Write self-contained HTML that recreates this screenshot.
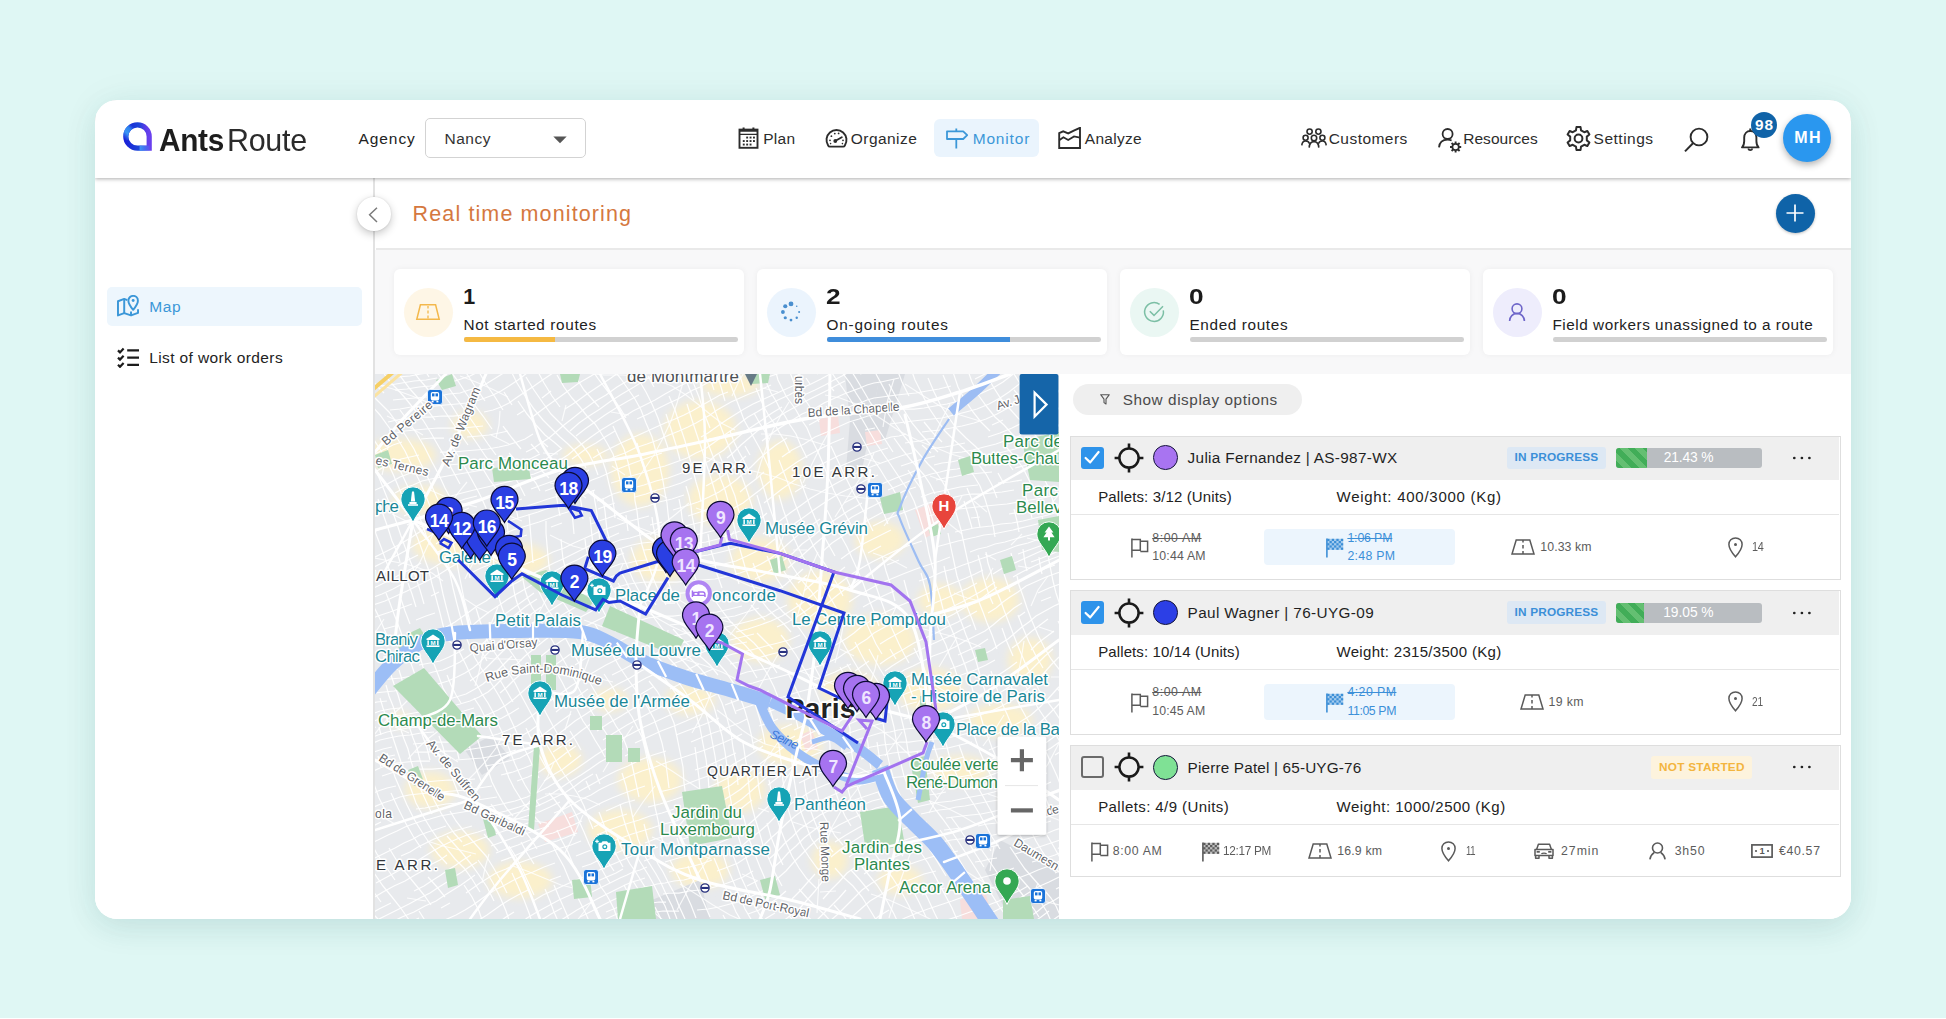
<!DOCTYPE html>
<html lang="en"><head><meta charset="utf-8"><title>AntsRoute - Real time monitoring</title>
<style>
*{box-sizing:border-box;margin:0;padding:0}
html,body{width:1946px;height:1019px;overflow:hidden}
body{background:#dff7f4;font-family:"Liberation Sans",sans-serif;position:relative}
#app{position:absolute;left:95px;top:100px;width:1756px;height:819px;border-radius:22px;background:#fff;overflow:hidden}
#shadow{position:absolute;left:95px;top:100px;width:1756px;height:819px;border-radius:22px;box-shadow:0 10px 30px 0 rgba(20,90,90,.10),0 0 40px 0 rgba(20,90,90,.05)}
#g{position:absolute;left:-95px;top:-100px;width:1946px;height:1019px}
.b{position:absolute;display:block}
.t{position:absolute;white-space:nowrap;line-height:1;display:block}
</style></head>
<body>
<div id="shadow"></div><div class="b" style="left:0;top:1018px;width:1946px;height:1px;background:#fff"></div>
<div id="app"><div id="g">
<svg class="b" style="left:375px;top:374px" width="684" height="545" viewBox="375 374 684 545" font-family="Liberation Sans, sans-serif"><rect x="375" y="374" width="684" height="545" fill="#e8eaed"/>
<defs><filter id="bl" x="-20%" y="-20%" width="140%" height="140%"><feGaussianBlur stdDeviation="4"/></filter><filter id="bl2"><feGaussianBlur stdDeviation="1.2"/></filter></defs>
<g filter="url(#bl)" fill="#fbf0cc" opacity="1"><ellipse cx="400" cy="455" rx="36" ry="16"/><ellipse cx="420" cy="500" rx="27" ry="14"/><ellipse cx="455" cy="545" rx="43" ry="20"/><ellipse cx="520" cy="560" rx="29" ry="16"/><ellipse cx="470" cy="425" rx="18" ry="13"/><ellipse cx="585" cy="455" rx="22" ry="10"/><ellipse cx="640" cy="470" rx="29" ry="36"/><ellipse cx="700" cy="430" rx="36" ry="29"/><ellipse cx="720" cy="500" rx="32" ry="25"/><ellipse cx="660" cy="560" rx="29" ry="22"/><ellipse cx="760" cy="560" rx="29" ry="22"/><ellipse cx="780" cy="470" rx="22" ry="29"/><ellipse cx="730" cy="385" rx="29" ry="11"/><ellipse cx="820" cy="600" rx="32" ry="29"/><ellipse cx="880" cy="640" rx="36" ry="25"/><ellipse cx="930" cy="690" rx="32" ry="22"/><ellipse cx="850" cy="690" rx="29" ry="18"/><ellipse cx="760" cy="640" rx="29" ry="22"/><ellipse cx="990" cy="600" rx="29" ry="22"/><ellipse cx="960" cy="770" rx="29" ry="14"/><ellipse cx="1000" cy="720" rx="32" ry="16"/><ellipse cx="790" cy="745" rx="32" ry="20"/><ellipse cx="740" cy="790" rx="25" ry="22"/><ellipse cx="650" cy="780" rx="32" ry="22"/><ellipse cx="620" cy="830" rx="32" ry="20"/><ellipse cx="700" cy="870" rx="29" ry="18"/><ellipse cx="560" cy="760" rx="22" ry="16"/><ellipse cx="430" cy="790" rx="25" ry="18"/><ellipse cx="460" cy="850" rx="29" ry="18"/><ellipse cx="520" cy="880" rx="32" ry="18"/><ellipse cx="400" cy="720" rx="11" ry="7"/><ellipse cx="880" cy="540" rx="25" ry="18"/><ellipse cx="940" cy="600" rx="22" ry="16"/><ellipse cx="1030" cy="660" rx="22" ry="22"/><ellipse cx="900" cy="880" rx="22" ry="14"/><ellipse cx="1020" cy="800" rx="18" ry="14"/><ellipse cx="830" cy="860" rx="18" ry="18"/><ellipse cx="690" cy="700" rx="25" ry="14"/><ellipse cx="610" cy="700" rx="18" ry="11"/></g>
<polygon points="845,374 880,374 872,420 862,470 846,470 850,420" fill="#d9dce1" />
<polygon points="880,374 905,374 885,440 868,440" fill="#d9dce1" />
<polygon points="465,750 492,735 510,758 482,775" fill="#d9dce1" />
<polygon points="640,905 700,880 710,919 640,919" fill="#d9dce1" />
<polygon points="1000,840 1059,870 1059,919 1010,919 985,870" fill="#d9dce1" />
<polygon points="915,510 940,500 950,525 925,538" fill="#f7dedd" />
<polygon points="538,824 572,812 578,832 545,842" fill="#f7dedd" />
<polygon points="819,419 838,416 840,433 821,436" fill="#f7dedd" />
<polygon points="865,432 880,430 882,444 867,446" fill="#f7dedd" />
<polygon points="800,735 812,730 818,748 806,752" fill="#f7dedd" />
<polygon points="960,900 985,890 992,919 962,919" fill="#f7dedd" />
<path d="M380 370L392 368L404 367L416 365M398 377L410 376L421 374L432 372L443 369M369 389L379 386L390 385L402 383L414 381L426 380L437 378M456 372L465 369L473 364M365 397L374 394M395 390L407 389L419 387L430 386L441 384L452 382L461 379L470 376L478 372L486 367M365 409L374 405M393 400L403 399L415 398L427 397L438 396L449 394L460 393L469 390L478 388L486 384L494 379L502 374L511 368M390 410L400 409L411 407L422 406L434 406L445 405L457 404L467 403L476 401L485 398L493 395L501 391L509 386L518 380L527 373L538 366M372 429M388 422L397 420L407 418L418 417L430 417L442 416L453 416L464 415M484 412L493 410L501 407L509 403L516 398L525 392L534 386L544 379L556 371M372 444M388 436L396 433L405 431L415 430L426 429L438 428L450 428L461 428L473 427L483 426M517 415L525 410M542 398L551 391M574 376L587 368M368 458L377 453L385 449L393 445L402 442M421 439L432 438L444 438M467 437L479 436L489 435L499 433L508 431M531 418L539 412L547 406L557 399L568 391L579 383L591 376L604 368M366 478L375 472L384 467L393 463L401 459L410 457L419 455M440 452L452 452L464 451L476 450L488 449L499 447L508 445L517 442L525 439L533 434M548 423M565 409L576 402L587 394L599 386L611 378L622 370M371 492L382 487L391 482L400 477L408 474L417 471L426 469M448 465L460 464L472 463L484 462L496 460L507 458M526 452L534 448L541 443L549 438L556 432L564 425L573 418L583 410L594 402L606 395L617 387L629 380L640 373L650 366M375 503M395 493L404 488L413 485L422 481L431 479L442 477L453 475L465 473L477 471L489 469L501 467L512 465L523 462L532 458L540 454M570 431L579 423L589 416L600 409L611 401L622 394L634 387L645 380L655 374M368 520L379 514L390 509L400 504L409 499L417 495L426 492M446 486M482 479M506 474L518 471L528 467M546 459L554 454L561 449M576 436L585 429L595 422L605 415L616 408L628 401L639 395M660 383M684 368L692 364M372 533L384 527M404 516L413 512L422 507M441 499L451 496L462 493L474 490L487 487L499 484L512 481L523 477L534 474L544 470M560 460L568 455L575 449L583 443L591 437L601 430L611 424L622 418L633 411L645 405L655 400L665 394L674 389L682 385L690 381L697 377L704 374L712 371M730 365M375 542M407 525L416 520L425 515L434 511L444 506L454 503L465 499L477 496M502 489L515 486L527 482L538 478L547 474L556 469M572 459L579 454L587 448L596 443L605 437L615 431M637 419L648 414L659 408L669 403L678 399L686 394L693 390L700 387L707 383L715 380L723 377L732 374L742 371M765 365M367 561L379 555L391 549L402 543L412 537L421 531L430 526M448 517L458 513L469 508M494 501L507 497M531 489L542 485L553 481L562 477L570 472L577 468M593 458L601 453L611 448L621 443L632 438L643 433L654 428L665 423L675 419L684 415L692 411L699 407L706 403L713 399L720 395L728 392M757 381L768 377L780 373L791 370L802 366M370 569L382 563L394 557L405 551L415 545L424 540L433 534L441 529L451 524L461 520L472 515L484 511L496 507L509 503L522 499M545 491L556 487L565 483L573 479L581 475L589 470M605 462L614 457L625 453L635 448L647 444L658 440L669 435L679 431L688 427L696 423L703 419L710 415L717 410L724 406L731 402L740 398L749 394L760 390L771 385M794 377L804 372M374 578M398 566L408 560L418 555M436 544L444 538M463 529L474 524L486 520L498 516L511 511L524 507L536 503L548 499L558 496L568 492L576 488L584 484L592 480L600 477L609 473L618 469L628 465L639 461L650 457L662 453M683 445M701 437L708 433L715 428L722 423L728 419L736 414L744 409L753 404L764 399L775 394L786 389L797 384M817 374L826 369L834 365M365 592L378 586L390 580L401 574L411 569L421 563M438 552L447 547L456 542L465 538L476 533L487 528L500 524L512 520L525 516L538 512L549 508L560 504L570 501L579 497L587 493L595 490M611 483L621 480L631 476L642 473L653 469L665 466L676 462L687 458L696 453L705 449L712 444L719 439L726 434L733 429L740 423L748 417L757 412L767 406L778 400L789 395L800 389L811 384L821 379L830 374L838 370L845 366M369 599L382 594L393 589L404 583M424 573L433 568L441 563L449 558L458 553M477 544L489 539L501 535L513 530L526 526L539 522L550 518L561 514L571 511L580 507M597 501L605 498L613 494L623 491L633 488L644 485L656 481L668 478L679 474L690 470L700 465L709 461L716 455L724 450L730 444L737 438L744 432L753 426L762 420L772 413L782 407M804 395L815 390L825 385L834 380L842 376L849 372L857 368L864 365M373 605L385 601L396 596L407 591L417 586L427 581L435 577L443 572L451 567L460 562L469 558L479 553L490 548L501 544L514 539L527 535M551 527L562 523M581 515M598 509L606 506L615 503M635 497L646 494L657 490L669 487L681 483L692 478M711 469M727 458L734 452L741 445L748 439L756 432L765 425L775 419L786 412L797 406L808 400L818 395L828 390L837 385L845 381M860 374L867 372L875 369L884 367L893 364M367 620L378 616L390 612L401 608L412 604M431 596L439 592M454 583M471 573L481 568L491 564M527 549M552 540M591 524L599 521L608 518L616 515L626 512L636 509L648 506L659 502L672 499L684 495M706 486L715 481L724 475L731 469L739 462L746 456M762 441L771 434L781 427L791 421L802 414L814 409L824 403L835 398L844 394L852 391L860 388L867 385L874 383L881 382L890 380L899 378M933 372L945 370L957 366M384 629L395 626M416 620L426 616L435 613M451 605M466 595M493 580L504 574L516 568L528 563L541 558L553 552L564 548L574 543L583 539L592 535L600 531L609 528L618 525L627 522L638 519L649 516M673 510L686 506L698 502L709 497L719 492L728 486L736 480L744 473L751 467L759 459L767 452L776 445L787 438M809 425L820 419M842 410L851 406L860 403L867 400L874 398L882 397L889 396L897 395L906 394L916 393L927 391L939 389L951 386M975 379L985 374L995 369M368 647L378 645L389 643L400 641L411 638L421 636L431 633L440 630L448 626L455 622L462 617L469 612L477 606L486 601L495 594L506 588L518 582L530 575L542 569L554 563L565 558L575 553L585 548L593 544L602 540L610 537L619 533M650 525L662 522M688 516L700 512L711 508M740 492L748 485L756 479L764 472M782 457L792 450L804 444L815 437L827 432L838 427L849 422L859 419L868 416L876 414L883 412L890 411L897 410L905 409L914 409L924 408L935 406L947 404L959 401L971 398L982 393L993 388L1003 382L1012 375L1020 368M383 657L393 655L404 653L415 652L425 649M452 640L459 635L466 630L473 625L480 619L489 612L498 606L508 599L520 592L532 585L544 578L555 571L566 565L577 560L586 555L595 550L603 546L612 543L620 540L630 538L640 535L651 533L664 531L676 528L689 525L702 522L714 518L725 513L734 508L743 503L752 496L760 490L768 483L777 476L787 469L797 462L809 455L820 449L832 443L844 438M865 430L875 428M890 424L898 423L905 422L913 421L922 420L932 419L942 418L954 415L966 412L977 409L989 404L1000 398L1009 392L1018 385L1027 377L1035 369M387 670L398 669M419 665L430 663L440 661L449 657L457 653L464 649M477 637L485 631L493 624L502 616L512 609L523 601L534 593M558 579L569 572L579 567M597 557L606 553L614 550L622 548L632 545L642 543L653 542M678 538L691 536L704 533L716 530L727 526M747 516M764 503L773 496L782 489L792 482L802 475L814 468L826 462L838 456L850 451L862 446L873 443L882 440L891 437L899 436L906 434M922 432L930 431L940 430L951 428L962 426L974 423L986 419L997 414L1008 408L1017 401L1026 394L1035 386L1043 378L1051 369M371 682L380 680L390 679L401 678L412 676L423 675L433 672L443 670L452 666L460 662L467 657L474 652L481 645L488 639L496 631L505 623L515 615L525 607L537 599M560 584L571 578L581 572L591 567L599 562L608 559L616 556L624 553M644 550L655 549M680 546L693 544L706 542L718 539L729 535L740 531L750 526L759 520L767 513M795 492L806 485M830 471L843 465L855 460L867 455L878 451L888 448M905 443L912 442L920 441L928 439L937 438M968 432M992 425L1003 420M1033 400L1041 392L1049 384L1057 375L1065 367M366 695L375 693L384 692L394 691L405 689L416 688L427 686L438 684L448 681L457 677L465 673L473 668L480 662L486 655L493 648L501 640L510 632L519 623L530 615L541 607M564 592L575 585L585 579L595 574L603 570L612 567L620 564L628 563L637 561L647 560M670 559L682 558L695 557L708 555L721 552L733 549L744 545M763 534L772 527L781 520L790 513L800 506L811 498L823 491L835 484L848 477L861 471L873 466L884 462L895 458L904 455L912 453M928 449L936 448L945 447L955 445L965 443M988 437L1000 433L1012 428L1022 423L1032 416L1041 409L1049 401L1057 393L1065 385M369 704L377 702L387 701M408 698M430 695M470 681L477 676L484 670L491 663L498 656L506 648L514 639L524 631L534 622L545 614L557 606L568 599L579 593L590 587L599 582L608 578L616 575L624 573L632 572L640 571L650 570L661 570L673 570M698 568L711 566L724 564L736 561L747 556L757 551L766 546L775 539M794 524L804 517L815 509L827 501L840 493L853 487L866 480L878 475M901 466L910 463L919 460L927 458L935 456M952 453L962 452L973 450L984 447L996 444L1007 440L1019 436L1030 430L1040 424L1049 417L1057 410L1065 402M372 714L380 711L390 709L400 708M446 700L456 697L466 694L475 689L483 684L490 678L497 671L504 664L512 656M529 639L540 631L551 623L562 615L574 608L585 602M604 592L613 589L621 586L629 584L637 583L645 582L655 582L665 582L677 582L689 581L702 580L715 579L728 576L740 573L751 569L761 564L771 558L780 551L789 543L798 535L809 527L820 519M844 503L858 496L871 489L884 483L896 478L907 474L917 470M934 465L942 463L951 462L960 460L969 459L980 457L991 455L1003 452L1015 449L1027 444L1038 439L1048 433L1057 427L1065 420M366 724L374 721L382 718L392 716L402 715L414 713L425 711L437 710L449 707L460 704L470 701L479 697L488 692L495 686L502 679L509 672L517 664L525 656L535 648L545 640L556 632L568 625L579 618L590 612L600 606L610 602L619 599L627 596L634 595M650 593M670 593L681 593L693 592L706 591M732 587M755 579L765 574L775 567L784 560L793 553L802 544L813 536L824 527L836 519L848 511L862 503M888 490L900 485L912 480L922 477L931 474L940 472L948 470L957 469L966 467M986 464L998 462L1010 460L1022 457L1034 453M1055 443L1064 437M367 730L376 727M394 722L405 720L416 719L428 717L440 716L452 713L464 711L474 708M500 693L507 687L514 680L522 673L531 665L540 657L550 649L561 641L573 634L584 627L596 621L606 616L616 612L624 609L632 606M648 604M665 603L675 603M698 602L710 600L723 598L736 596L748 592M769 582M788 568L797 560L806 552L816 543L827 534L839 526L852 517L865 510L879 503L892 497L904 491L916 487M936 480L945 478L953 477L962 475L971 474L981 473L992 472M1015 468L1027 465L1039 461L1050 457L1061 452M370 738L378 735L387 732L397 730L408 728L419 727L431 726L444 724L456 723L468 720L479 718L489 714L498 710L506 705L514 699L522 692L530 685L538 678L548 670L558 663L569 655L581 648L592 641M614 631M633 623L641 620L648 618L656 617L664 616L673 616L682 615L693 614L705 613L717 612L730 609L742 606M765 597L775 591L785 585L794 577L803 569M822 552L832 543L844 535L857 527L870 519L883 512M921 497L932 493L942 491L951 489L960 487L968 486L978 485M998 483L1010 482L1022 480M1046 474L1058 470L1068 465M371 744L380 740L389 738L399 736L410 735L421 733L434 732M459 730L471 728L483 725L493 722L502 718L511 713L519 708M535 695L543 688L553 680M575 665L586 658L598 652L610 646L620 641L630 636M647 630L655 627M670 625L679 624M699 622L710 620L722 618L735 616L747 612L759 608M780 597M798 583L807 575M826 558M848 541M873 526L887 519L900 514L913 509L925 504L936 501L946 499L955 497L964 495L972 494L982 494L991 493L1002 492L1014 490M1062 479M365 756L374 752L383 749L392 747M413 744L425 743L437 742L450 742L463 740L476 739L487 737L498 734L508 730L517 726L525 721L533 715L542 708L550 701L560 694L571 686L582 679L594 672L606 665L618 659L629 653L639 649L648 645M664 639L671 636L679 635L687 633L696 632L706 630L718 629L730 626L742 623L754 620L766 616L776 610L787 605M804 591L813 583L822 575M841 559L852 551L865 543L877 537L891 530M929 516L940 513M959 509L968 508L977 507L986 506L996 505L1007 504L1018 502L1030 500L1043 498L1055 495L1067 491M368 763L377 760L385 757L395 755M415 752L427 752L440 751L453 751L466 750L479 748L491 746L502 744L512 740L521 736L530 731L538 725M556 712L566 704L577 697L588 689M612 675L624 669L635 663L645 658L655 654L663 650L671 647L678 644L686 642L694 640M713 637M736 632L748 629L760 625L771 621L782 616L792 610L801 604L810 597L818 590M835 575L845 567M868 553L881 546M932 527L943 524M971 518L980 517M1009 514L1021 512L1033 510L1046 507L1058 504M371 772L380 768L388 765L397 763L407 762L418 761L430 761M456 760L469 759L482 758L494 756L506 753L516 750M535 740L543 735L552 728L561 721L571 714M593 699L606 691L618 684L630 678L641 671L652 666M670 657L678 654M693 648L701 646L710 644L719 642L730 640L742 637L754 634M777 627L788 622L798 616L807 610L815 604L823 597L831 590L840 583L849 576L860 569L872 562L884 556L897 550L910 545L922 541M955 532L965 530L974 528L982 527L991 526L1001 524L1012 523L1023 521L1035 518L1048 515L1061 511M382 776L391 773L400 771L410 770L421 769L432 769L445 768L458 768M485 766L497 764L509 761L520 758L529 753L538 748L547 742L556 736L565 729L575 721L586 714L598 706M623 691L635 684L646 678L657 673L667 668L675 663L683 660L691 656L698 654L706 651L715 649L725 647L736 644L747 642M770 635M793 627L802 622L811 616L819 610L827 604L835 597L844 590L853 584L863 577M887 565L899 560M936 547L947 544L958 541L967 539L976 537L984 535L993 534L1003 532L1013 530L1025 527L1037 524L1049 521L1062 517M369 795L378 791L387 788L396 786M414 783L425 782L436 781L449 780L462 780L475 779M501 775L513 772L524 768L534 764M553 752L562 746L571 739L581 731L592 723L604 716L616 708M641 694L653 687M683 672L691 668L699 664M715 659L723 657L733 654L743 652L755 649L766 646L778 643L789 640L800 635M826 620L834 614M849 602L858 596L868 590L879 584L891 579L903 574L916 569L928 565L940 561L950 557M970 552L978 549L987 547L995 544L1005 542L1015 539L1026 536L1038 533L1051 529L1064 525M374 807L383 803L392 800L400 797L409 795L418 794L429 793L440 792L453 791L466 790L479 788L492 786M517 781L528 777L539 772L548 766L557 760L566 753L576 746M597 731L609 723L621 716L634 708L647 701M670 689L680 684L690 679L698 675L706 672L713 669M730 664L739 662L750 659L761 657L772 654L784 651L795 648L806 644L815 639L824 635M839 624L847 619M863 607L872 602L883 596L894 591M919 581L931 577L942 572L953 569L963 565L972 562L980 559L989 556L997 553L1006 550L1016 546L1028 543L1039 539L1052 535L1065 530M371 827L381 822M399 815M416 809L425 808L435 806L446 804L458 803L471 801L484 799L497 797M522 790M544 781L553 775L563 769L572 762L581 755M603 740L614 733L627 725L640 718L653 711L665 705L677 700L688 695L697 690L706 686L714 683L721 680M738 675L747 672L758 670L769 668L780 665M813 655L823 651L832 647L839 643L847 638L854 633L861 627L869 622L878 616L888 611L899 606L911 601L922 596L934 591L946 586L956 582L966 578L975 574L983 570M1018 554L1029 550L1040 546L1053 541M367 845L378 840L388 835L397 831L405 827L413 824L422 821L430 819L440 816L451 814L463 812L475 810L488 807L502 804L515 801L527 797L538 792L548 787L558 781L567 775L576 769L586 762L596 755L607 748L619 740L631 734L644 727L657 721L670 715L682 710L693 705L702 700L711 697L719 693L727 690L735 687L744 685L753 683L763 680L774 678L786 675L797 672L809 669L819 666L829 662L838 658L845 653L853 649L859 644L867 639L874 633L883 628L892 623L903 617M926 607L937 602L949 597L959 592L968 588L977 583M993 574L1001 569L1010 565L1019 561L1030 556L1041 551L1053 547L1066 542M375 858L385 853L395 848L404 843L413 839L420 835L428 832L437 829L446 826M468 820M493 814L506 811L519 807L531 803L542 798L553 793L562 787L571 781L581 775L590 769L600 762L611 756M635 743L648 737L661 731L674 726L686 721L697 716L707 712M725 705L733 702L741 699L749 697L759 694L769 691M791 686M814 680L825 676L835 672L843 668L851 664M865 654M880 644L888 639L897 634L907 628L918 623L930 618L941 612L952 607L962 602L971 597L980 592L988 587L995 582M1011 572M1031 562L1042 558L1054 553L1066 548M369 873L380 867M401 856L410 852L418 847L426 843L434 839L442 836L451 832L461 829L472 826M497 819L510 815L523 811L535 807L546 802L556 797L566 792L575 786L583 780L593 774M625 756L637 750M676 735L689 730L700 726L710 722L719 718M736 711L744 708L753 705L762 702L772 699L783 697L795 693L806 690L818 687L828 683L838 679M855 671L862 666L869 661M891 646M910 635M932 625L944 619L954 614L964 608L974 603L982 598L990 592L997 587M1013 577L1022 572L1032 567L1043 562L1054 558L1067 553M376 883L387 877L398 871L408 866L417 861L425 856L433 851L440 847L448 843L457 839L467 835L478 832L490 828L502 824L514 820L527 816L539 812L550 807L560 802M578 792L587 787L596 782L606 776L616 771L628 766L640 760L653 755L666 751M691 742L703 737L713 733L722 730L731 726L739 723L747 719M765 713L776 709L787 706L798 702M821 695M842 687L851 682L859 678L867 673M880 664L887 659L895 654L904 649L914 643L925 638L936 633L947 627L958 622L968 616L977 611M1007 589L1015 584L1024 579L1033 574L1044 569L1055 565M371 899L383 892L394 886L405 881L415 875L424 870L432 864L440 860L447 855M463 846L473 842L483 838L495 834L507 830L519 826L531 822M554 813L564 809L573 804L582 799L591 795L599 790L609 785L619 781L630 776L642 771L655 767L668 762L681 758L693 754L705 750L715 746L725 742L734 738L742 734M759 726L768 723L778 719M801 711L813 706L825 702L836 698L846 694L855 689L863 685L871 680M885 671L892 666L900 661L908 656L918 651L928 646L939 641L950 636L961 630L971 625M988 613L996 608L1003 602L1010 597L1018 592L1026 586L1035 582L1046 577L1057 573L1069 569M368 915L379 909L391 903M414 891L424 886L433 880L441 875L448 870L456 865L463 860L471 855M491 846L502 842L513 838L525 834L537 830L549 826M569 818L578 814L587 810L595 806L603 802L612 798L622 794L633 790L645 786M670 778M695 770L707 766L718 761L727 757L736 753M753 743L762 739M781 729L792 724M816 715L828 710M868 692L875 688L883 683L889 679L897 675L904 670L913 666L923 661L933 656L944 652L955 647L965 641L975 636L985 631L993 625L1000 619L1007 614L1014 608L1022 603M1038 593L1049 588L1060 584M373 922L385 916L397 910L409 904L420 898L430 893L439 887L447 882L454 877L462 872L469 867L477 862M496 853L506 849L518 845L530 840L541 836L553 833L563 829L573 825L582 821M606 811L615 807L624 803L635 800M659 792L672 789L684 785L697 780L708 776L719 772L729 767L737 762L746 757L754 752L763 746M794 730L805 725M841 710L852 705L862 701L870 697L878 692L885 688L892 684L900 680L907 677L916 673M936 664M958 655L969 650L979 645L988 639M1004 628M1018 617L1025 612M1041 601L1051 597M378 928L390 923L402 917L414 912L425 906L436 901L445 895L453 890L461 885L468 880L475 875M501 861L512 857L523 852L534 848L546 844L557 841L567 837L577 833M594 827L601 823L609 820L618 817L627 814M648 807L660 804L673 800L685 796M709 787L720 782L730 777L739 771L747 766M764 754M784 742L795 736M819 725L831 720M854 710L864 706L873 702L881 698L888 694L896 691L903 687L911 684L919 681L929 677M950 669L961 665L972 660L982 655L992 650L1000 644L1008 639L1015 633L1022 627L1029 622L1036 616L1045 611L1054 606L1065 601M395 929L407 924L419 918M441 908L450 903M466 893L473 888L480 883L488 878L496 873L506 869L516 864L527 860L538 856L550 852L561 848L571 845L581 841M597 835L604 832L612 829L620 826L629 823L639 820L650 816L662 813L674 809M710 795L721 790L731 785L739 779L748 773L756 767L765 760L774 754L784 747L795 741L807 735L819 729L832 724L844 719L855 715L865 710M898 697L905 694L913 691L922 688M942 682L953 678L964 674L975 670L986 665L995 660M1012 648L1019 643L1025 637L1032 631L1040 625L1048 619M1068 609M425 929L436 924L447 919L456 915L465 910L473 905L480 900L487 895L495 890L503 886L512 881L522 876L533 872L544 867L555 863M576 856L586 852L594 849L602 846L609 843L616 840L624 837L632 834L642 831L652 828L664 824L676 821L688 816L700 812L711 806L722 801L732 795L741 789L749 782L757 775L766 768L775 761M796 748L808 742L820 736L833 730L845 726L856 721L867 718M885 711M901 707L909 704L917 702M936 698L946 695L957 692M991 679L1000 674L1009 668L1017 662M1031 650L1038 643L1046 637L1054 631M471 925L479 920L487 915L494 910L501 905L509 900L518 895L528 890M550 880L561 876M582 867L591 864L599 860L607 857L614 854L621 851L628 848M645 843L655 839L666 836L678 832L690 828L702 823L713 817L723 812L733 805L742 799L750 792L758 785L767 777M796 756L808 750L821 744L833 739L846 734L858 730L869 727L879 724L888 722M904 719L912 717L920 716L930 714L939 712L950 710M985 700L996 695L1006 689L1015 683L1024 677L1031 670L1038 663L1045 656L1053 649M491 928L498 923L506 917L514 912M533 901L543 895L554 890L565 885L576 880L586 876L595 872L604 868L611 865L618 862L625 859L632 856L640 853L648 850L658 847M680 840L692 836L703 831L715 826L725 820L735 813L743 807L752 800M768 785L777 778L786 771L797 764L809 757L821 752M846 742L859 739L870 736L880 733L890 732L898 730L906 729L915 728L923 727L932 726L942 724L953 722L965 719L977 716L989 712L1000 707L1011 701L1020 695L1029 688L1037 680L1044 673L1051 665L1058 658L1067 650M519 925L527 918L537 912L548 906L559 900L570 895L581 889L591 885L600 880L609 876L616 873L623 869M644 861L652 858M672 852L683 849L694 845M727 829M754 809M769 795L778 788M798 774L810 768L822 762L835 757L847 753L860 750L871 747L882 745L892 744L900 742L909 742L917 741L926 740L935 739L946 738L957 736L969 733L981 729L993 725M1026 706M1051 683M1066 667M531 928L540 921L551 914L562 908M584 896L594 891L604 886L612 882L620 878L627 875L633 872L640 870L647 867M665 862L675 859L686 856L697 852L708 848L719 843L730 838L739 832L748 825L756 818L763 811L771 804L780 797M799 783L811 777L823 771M861 759L873 757L883 755L893 753L902 752L911 752L920 751L928 750L938 749L948 748L960 745L972 742M997 734L1009 728L1020 722L1031 715L1040 707L1048 699L1056 690L1064 682M555 924L566 917L577 910L588 904L599 898L609 893L617 889L625 885L632 882L639 880L645 878M669 872L679 869L690 867L701 864L712 860M734 850L743 845L751 838L759 832L767 825L775 817L783 810L792 803L802 797L813 790L825 785L838 780L850 776L863 772L875 770L886 768L896 766M914 764L923 764L932 763L942 761L952 760L964 757M989 750L1001 745L1014 739L1026 732L1037 725L1046 717L1055 708L1064 699M580 917L592 911L603 905L613 900L622 896L630 892L637 890L644 887L650 886L657 884L665 883L674 881L684 880L695 877M717 871L728 867L738 863L747 857L756 851L764 845L771 838L779 831L787 823L795 816L805 809L816 803L828 797L840 792L853 787L866 784L878 781L889 778L899 777L908 776L917 774L926 774L935 772L945 771L956 769M979 763L992 759L1006 754L1018 747L1031 741L1042 733M1061 716M606 912L616 908L626 904L634 901L642 898M663 894L671 893L679 893L689 891L700 890L711 888L722 885L733 881L743 877L753 871M769 859L777 852L784 844L792 837L800 829L810 822L820 815L832 809L844 804L857 799L869 795L881 791L892 789M912 785L921 784L930 783L939 781L949 780L959 777L971 775L983 771M1010 762L1023 756L1036 749L1047 742L1058 734L1068 725M597 924L608 918L619 913L628 910L637 907M652 903L659 902L666 902M683 901M703 899M726 894M747 886L757 881M773 868L781 861L788 853L796 846L804 838L813 831L824 823M860 806L872 801L884 798L895 795M915 791L924 789L933 788L942 787M962 783L974 780L986 777L999 772L1013 767L1026 762L1039 755L1051 748L1062 740M610 925L621 921L631 918L640 915L648 913L656 912L663 911L671 911L679 911M697 910L708 909L719 907L730 904L742 901L752 896L762 891L771 885L778 878L786 871L793 863L801 855L809 847L818 839L828 832L839 825L851 819L864 813L876 808L888 805L899 801L910 799L919 797L928 795L937 794L946 792M966 789L977 786L990 783L1003 779M1029 768M1055 755L1066 748M645 927L653 926L661 925L669 925L676 925L684 925L694 924L703 924L714 923L726 921M748 914L759 910L769 904L778 898L786 891M801 875M816 858M835 842L846 835L858 828L870 822L882 817M905 810L916 807L925 805L934 803L943 802L952 801L961 799L971 797L982 795L994 792L1007 788M1034 779L1047 773M742 927M765 919L775 913M792 899L800 891L807 883L815 874M831 857L841 849L852 842L863 835L876 829L888 824L899 820M921 814L930 812L939 810L948 809L956 807L965 806L975 804L986 802L998 800L1011 796L1024 792L1038 788L1051 782M771 928L782 922L791 915L800 908L808 899L815 891L822 882L830 874M849 857L859 850L871 843L882 837L894 832L906 828L917 824L927 822M946 818L954 817L962 816L971 815L981 814L991 812L1003 809L1016 806L1029 803L1042 798L1055 793L1068 788M799 923L808 915M823 899L831 890L839 882L847 873L857 866M878 852L890 846L902 841L914 837L925 834M944 830L953 829L961 828M978 826L987 824L997 823L1008 821M1034 814L1047 810L1060 805M815 922L823 914L831 906L839 898L846 890M864 874L875 867L886 861L897 856L909 851M932 844L942 842L951 840L960 839L968 838L976 837L984 836L993 835L1003 833M1025 828L1038 825L1051 821M822 929L830 921L838 914L846 906L854 898L862 890L872 883L882 877L893 871L905 866L916 862L928 858L939 855L949 853L958 851M975 849L982 848L990 847L999 845M1019 841L1030 838L1043 835L1055 830L1068 826M846 923L854 915L862 908L870 901L880 895L890 889L901 883L912 879L924 874L936 871M957 866M975 862L982 861L990 859L997 858M1015 854L1025 851L1036 848L1048 844L1060 840M863 929L871 923L879 916L889 910M922 895L933 891L945 888M966 882L976 879L984 877L992 875L999 873L1006 871L1014 868M1032 862L1043 859L1055 855L1066 850M895 923L905 918L917 913L928 909L940 905L952 901L963 897M983 891L991 888L999 886L1006 883L1013 880L1021 877L1029 874L1038 870L1049 866L1060 861M935 924L947 920L959 916L970 912L981 908L991 904L999 901L1007 897L1014 893L1021 890L1028 886M1055 873L1066 868M951 928L963 924M985 915L995 911L1003 907L1011 903L1018 899L1025 895L1033 890L1040 886L1049 882L1059 877M1001 922L1010 918L1018 913L1025 908M1040 898M1056 889L1066 884M1015 926L1023 921L1031 916L1038 911L1045 905L1053 901L1061 896M1034 922L1041 917L1049 911M1065 902M1045 925L1053 920L1060 915L1069 910M1064 926" stroke="#ffffff" stroke-width="1.25" fill="none" opacity="0.92"/>
<path d="M1055 367L1063 376M1038 368M1054 386L1063 396M1021 369L1028 378L1036 387L1045 396L1054 406M1014 374L1021 385L1030 394L1038 403L1047 412L1056 422L1065 434M1000 368M1014 390L1023 400L1031 408L1040 417L1049 428L1058 439L1066 451M987 376L994 388L1001 399L1010 409L1018 418L1027 426L1036 436L1045 446L1052 458L1059 471L1065 484M967 368L972 382L979 396L987 407L995 417L1004 425L1012 434L1021 443L1029 453L1037 464L1043 476L1049 489L1053 501L1057 512L1059 521L1061 529L1061 535L1062 542L1063 548L1063 556L1065 566L1067 576M953 372L958 387L965 400L973 412L981 422L990 431M1007 448L1015 457L1023 468L1029 480L1034 492M1042 516L1044 526L1045 534L1046 541M1048 554L1049 561L1051 571L1053 581L1056 593L1060 605L1066 617M943 375L949 389L956 403M972 425M989 442M1006 460L1013 470M1025 494L1029 506L1032 518M1036 537M1039 557L1040 565L1042 574M1048 596M1058 621L1064 632M928 378L934 392L941 406L949 418L957 429L966 438L975 446L983 454M998 473L1004 484M1014 509L1017 521L1019 532M1023 549L1024 556L1025 563L1027 571M1032 591M1053 640M1067 660M910 366L915 380L922 394L929 408L937 420L945 431L954 440L963 448L971 456L979 465L986 474L992 485L997 498M1008 535M1011 553L1013 561M1017 576L1019 585L1023 596L1027 608L1032 621L1038 635L1044 647L1051 659L1059 669L1066 678M897 369L902 382L909 396M924 422L933 433L942 442M959 458L967 466L974 476L980 486L985 499L989 512L993 525L995 537M1000 558M1004 574L1007 583L1010 592M1018 615L1023 628L1029 642L1036 656L1043 668M1057 688L1064 697M889 384L896 397L904 410L912 423L921 434L930 444L938 452M967 488L972 500L977 513L980 527M986 552L988 563L991 572L993 581L996 590L1000 599L1004 610L1009 623L1014 636L1020 651L1026 665L1033 678L1039 690L1046 700L1053 709L1059 718L1065 727M876 374L882 385L889 398L897 411L905 424M922 445L931 453M946 469M964 501L968 514L972 528M978 555L981 566L983 576L986 586L989 595L993 604M1002 628L1007 642L1013 656M1025 685L1032 697L1038 708L1044 717L1050 726L1056 735L1062 745L1067 756M861 367M873 387M887 412L896 425L904 436L913 447L921 456L928 464L936 472L942 481L948 491L953 503L957 516L961 530L964 544L967 558L970 571L973 582L976 592L979 602L983 612L987 623L992 635L997 649M1008 679L1014 693L1020 706L1026 717L1032 727M1042 745L1047 754L1052 765L1057 776L1062 789M847 364L852 372L857 380L863 390L870 402L878 414M894 438L902 449L910 459L917 467L924 475L930 484L935 494M948 533L951 548L954 562L957 576L961 588L964 599L968 609L972 619L976 630M991 671L996 686L1001 701L1007 714L1012 726L1017 736L1022 746L1026 754M1036 773L1040 784L1045 796L1050 809M1060 833L1066 843M840 369L844 375L850 383L856 393L863 404L870 416L878 429L886 441L893 452M908 470L914 479L920 487L925 497L929 508L933 521L937 536M944 566L947 580L950 592L954 604L958 614L962 624L966 635L971 647L976 661L980 675L985 691L990 706M1000 732L1004 743L1009 752L1013 760M1022 778L1027 789L1032 801L1037 813L1042 826L1048 837L1054 847L1059 856L1065 863M832 373L836 379L842 387L848 396L855 407L862 419L869 431L876 443L884 455L891 465L897 474L903 483L909 491L914 501L918 512L922 525L926 539L929 554L933 569L936 584L940 597L943 609L947 619L952 630L956 640L960 652L965 665L970 680L974 695L979 710L983 724L988 737L992 748L996 757L1000 766M1014 793L1019 804L1024 817L1030 829L1036 841L1042 851L1048 860L1055 868L1061 874L1066 880M820 371M828 384L834 391M853 422L860 434L867 447L873 459L880 469L886 479L892 487L897 496L902 506L906 516L910 529M921 573L925 588L929 602M937 625L941 635L946 645L950 657L955 669L959 683L963 698L968 713L972 728L976 741L980 752L984 761L988 770L992 778L997 787L1001 797L1007 807L1012 819L1018 832L1025 844L1031 855M1051 879M1063 892L1068 900M806 378L810 384M826 406L832 416M845 440M857 465L863 477M874 496L879 504L884 514L888 524M896 550M904 580L908 595L913 609L917 621L922 632L926 642M935 663M952 717M959 745L963 756L967 766L971 775L975 783L980 791L985 800L991 811L997 823M1010 847L1018 859L1025 869L1032 877L1039 885L1045 891L1051 898L1056 906L1060 915L1064 926M788 365L791 375L794 383L798 390L803 397L808 404L813 412L819 422M831 446L837 459L843 472L849 484L854 494L859 503L864 512L868 521L873 531M882 556L886 571L891 586L895 601M905 627M914 648L919 658L924 668L928 679L932 692L936 705L940 720L943 734L947 747L950 759L954 769L958 778L962 786L967 794L973 803L979 813L985 824L992 837L1000 849M1015 872L1023 881L1030 889L1036 896L1042 904L1047 912L1051 921M775 369L778 380L782 388L786 396L791 403L796 410L801 419L807 428L812 440L818 452L824 466L829 479L834 491L840 502L844 512L849 521L854 530L859 540L863 550L868 563L873 577L878 592L883 606L888 620L894 633L899 644L904 654L909 663M918 683L922 695L925 708L929 722L932 736L935 749L939 761L942 771L946 780L951 788M962 804M983 838L991 851M1007 875L1015 885L1022 894L1028 902L1034 909L1039 917M764 372L767 384L771 393L776 401L780 409L785 416L790 425L796 434L801 446L807 458M817 485M827 510L832 520L837 529L842 538L847 547L852 558L857 569L863 583L868 597L874 612L879 626M890 649L896 659M905 676L909 686L913 697M920 723L923 737L926 750L930 762L933 772L937 781L942 790M953 806M975 839L983 852L992 865L1000 877L1008 888M1022 906M1032 923M756 388L760 398L764 407L769 416L774 423L779 432L785 442L790 453M800 479L805 493L810 506L815 518L820 529L825 538L830 547L835 556M846 577L852 590M864 618L870 631L876 644L882 654M893 672L897 681L901 690L905 700L908 711L911 724M917 751L920 763L924 774L928 783L932 791L938 799M951 817L959 828L967 840L975 853L984 867M1000 891M1014 911L1020 919M737 366L741 379L745 392M754 413L759 422L764 430L769 439M779 460L784 473L789 486L794 501L799 514L804 527L809 537L814 547L819 556L825 564L831 574L837 584L843 596M856 623M869 649L875 660L880 669L885 677L890 685L894 693L897 702L900 713L903 725L906 738L908 751L911 764L915 775L919 784M929 800L935 809L942 818L950 829L958 841L967 855L976 869L984 882L992 895L999 906L1006 916L1011 925M726 369L730 383L735 396L740 409L744 420L749 429L754 438L759 447L764 457L769 468M779 495L783 509L788 523L793 536L798 547L803 557L809 565L814 574L821 583L827 592L834 604L841 616M855 642L861 654L867 665L873 674L878 682L882 689L886 697L889 705L891 715L894 727L896 739L898 752L901 764L904 776L908 786L913 794M925 811M940 830L949 843L957 856L966 871L974 885L982 898L989 910M716 372L721 387L725 401M745 446L750 455M760 476L764 489L768 503L773 517L777 531L782 544L787 556L792 566L798 575L804 583L811 591L818 601L825 611L832 623L839 635L846 648L853 660L859 670L865 680L869 687L873 694L877 701L879 709L882 718L884 729L885 741L887 753L890 766L893 777L897 788L901 797L907 805L914 813L921 822L929 833L937 845L946 859L955 873L963 888L971 902L977 915L983 926M709 375L714 390M730 431L734 442L739 452L744 461L749 471M757 495L761 508L765 523L770 537M779 562L785 573L791 582L797 590L804 598L811 606M833 639M847 664L853 674L858 683L863 691M869 704L872 712L874 720M877 742L879 755L881 767M888 790L892 799M904 816L912 825L920 835L928 847L937 861L946 876M961 905M708 392L714 408L719 422L724 435L729 447L733 457L738 467L742 477L746 488L750 500L754 513M767 556L772 568L777 579L783 588M796 603L804 612L811 621L819 632L826 643M840 667L846 678M855 695L859 701L861 708L863 715M866 733L868 744L869 757L871 769M878 792L883 802L888 811L895 819L902 828M919 850L928 863L936 878L944 893L952 908L958 922M688 368L693 382L699 397L704 413L710 428M719 454L724 466L728 476L731 486L735 496L738 508L742 521L745 535M753 563L758 576L763 587L770 596L776 604L783 612L791 619L799 628L806 638L814 649L821 661L827 673M838 693L842 701L845 708L847 714L848 721L850 728L850 738L851 748L853 761M857 786L861 797L866 808L872 817M894 844L903 856M920 883L928 899L935 914L942 928M682 371L688 385L694 400M704 431L709 446L714 459L718 470L721 480L725 490L728 501L731 512L734 525L737 539L741 553L745 567L750 580L755 591L761 600L768 609L775 616L783 623L791 632M813 664L819 675L825 686M833 704L836 711L838 718L839 724M841 741L842 751L843 763L845 776L848 789L851 801L856 811L862 821L869 830L877 839M894 859M911 887L919 902L926 917M675 375M687 404L692 420L697 435L702 450L706 463L710 475L713 485L716 495L719 505L721 516L724 529L727 542L731 556L735 570L739 584M751 605L758 613L765 620M781 635L789 645L796 655L803 667L810 678L815 690L819 700L823 709M827 722L828 729L829 736L830 745L830 755M833 780L836 793L840 805L845 816L851 826M866 844L875 854L883 865L892 877L901 891L909 906L916 922M657 371M669 396L675 410L680 426L685 441L689 456L693 470L696 482L699 492L701 502M708 534L710 547L714 560L717 574L722 588M741 618M757 633L765 641L773 649M787 671L793 683L799 695L803 705L806 715L808 723L810 730L811 737L811 744M813 763L814 775L816 788L819 801L823 814L829 825L835 836L843 845M859 863L868 874L877 885L886 899L894 914L901 929M648 376L654 387M666 414L671 429L676 445L680 460M686 486L689 496L691 506L692 515L694 525L696 536L699 549M706 576M716 602L723 612L730 621L738 629L746 636L754 643L762 652L770 662L777 673M788 697L792 709L796 719L798 728M800 742L801 750L801 758M804 780L806 793L809 806L814 820L819 832L826 843L833 852M851 870L860 880L869 891M885 919M640 382L646 392L652 404L658 418L663 433L668 448M679 499L681 509L682 518L684 528L686 538L688 550L692 563L695 577L700 590L706 603M720 623L728 631L737 638L745 645L753 654L761 664L768 675L774 687L779 700M787 722M792 755L792 763L793 773L795 785L797 798L801 812L806 825L811 838L818 849M835 868L843 877L853 886L862 897L870 910L878 923M614 370L621 379L628 389L635 399L641 410L646 423L652 437L656 452L660 467L663 481L665 493L667 503L668 513L669 521L671 530L673 540L675 552L678 564L682 578L687 591L693 604L700 615L708 625L716 633L725 640M742 657L750 666L757 678M768 703L772 716L775 727L778 737L779 746L780 754L781 762L782 771L783 781L785 792L787 805L791 819L796 833L802 846L809 857L817 868L826 877M844 895M862 917M592 370L599 380L606 389L613 398L620 408L626 418M637 443L641 458L645 472M649 497M652 517L653 525L655 534L656 543L659 553L662 565L667 578L672 592L678 604L686 616M703 635L711 643L720 651L729 660L737 669M750 693L756 707L760 720L763 733L765 744M767 763M769 780L771 790L773 802L776 815L780 828L786 843L792 856L799 868L807 879L816 888M834 905L843 915L851 926M577 379L584 390L592 399L599 407M613 426L618 437L624 449L628 462L631 476L634 489L635 501L637 511L638 520L639 528L640 536L642 545L645 555L649 566L653 578L659 592L666 605M682 628L691 637L700 646L710 654L718 663L726 672L734 684L740 697L745 711L749 725L752 738L754 750M757 771L758 780L759 789L761 799M767 823L771 837L777 852L783 865M799 889L807 898L816 907L825 915L833 924M557 375L564 387L572 398L580 407L587 416L595 424L601 433L607 443L613 454L617 467L620 480L622 493M626 515L627 523L628 531M631 547L634 556L638 567L643 579L649 592L656 605M673 629L682 639L692 648L701 657L710 665L718 675M731 700L736 714M743 743L745 756L747 768L748 778L749 787L750 797L752 807L755 818L759 831L763 845L769 859L775 873L782 886M807 916L816 924M537 370L544 383L552 396L560 407M584 432M597 449L602 459L606 471L609 484L612 496L614 508L615 518M617 534M621 549L624 558L628 568L633 580L640 593L647 606L655 619L664 631L674 641L683 651L692 660L701 669L709 679L716 690L722 703L727 718L731 733L733 748L736 762L737 774L738 785M743 815L746 826L749 839L754 852L760 867L766 881L773 894M789 916L797 924M526 377L534 390L543 403L551 414L560 423L568 431L576 438L583 446L589 454L594 464L598 475M603 499L605 511L606 521L607 530L609 538L610 545L613 552M620 570L626 581L632 594L640 607M657 633L666 644L676 654L685 663L693 672L701 682L708 694L714 707L718 721L722 736L725 752L727 766L728 779L729 791L731 801L732 811M737 832L741 845L746 858L751 872L757 887L764 900M779 922M510 369L517 383L525 396L534 409L543 420L552 429L560 437L568 444L575 451L581 459L586 468M593 490L595 502L597 514L598 524L599 533L600 541M608 563M618 583L625 595L632 609L640 622L649 635L659 647L668 657L677 667M693 686L699 698L705 710L709 725L712 740L715 756L717 771L718 785L720 797L721 807L723 818L725 828M731 850L736 863L741 877L748 892L754 905L761 917L769 928M502 374M518 401L527 414L536 425L545 435L554 442L562 449M580 472L584 482L586 493M590 517L591 527L592 536L593 544L595 551M601 566L605 575L611 585L618 598L625 611L634 625L642 638L652 650L661 661L669 671L677 680L684 690L691 701L696 714L700 728L703 744L706 759L708 775L709 789M712 812L714 822L716 832M723 854L727 867L733 881L739 895L745 909L752 921M488 366M504 392L512 405M539 439L548 447M569 467M577 485L580 496L582 508L583 519M585 539L586 548L588 555L591 562L594 569L599 578L604 588L611 600L619 613L627 627L636 641M653 664L662 675L669 684L676 694L682 705L688 718M695 747L697 763L699 778L700 792L702 805L703 816L705 827L707 836M714 858L719 870L724 884L730 898L736 912L743 924M479 372L486 384L495 397L503 410M531 444L539 453M559 473L564 481L567 490L570 500L572 512L573 523L574 534M576 553M583 575L588 583M600 605L607 618L616 632M633 659M649 681L657 691L663 701L669 711L674 723L677 737L680 752L683 767L684 783L686 797L688 811L689 822L691 832M697 852L701 862L706 874L711 887M723 915L730 928M462 367L469 377L476 388L485 401M503 426L512 438L521 449M537 465L543 472L549 478M556 494L558 505L560 516M561 539L562 550L563 559L565 567L567 575L571 582L575 590L581 600M595 624L603 638L611 652L619 666L627 678L635 689L642 699L648 708L654 719L658 730L662 743L665 757L667 772L669 788M677 838L680 847M688 866L692 878L698 890L704 903L710 917M451 372L458 381L465 392L474 404L483 416L492 429M509 453L517 462L525 470L531 477L536 483L540 491M546 521L546 533L547 545L548 556L549 566L551 575L553 583L557 591L561 599L567 608L574 619L581 632L588 646M604 674L612 686L619 698L626 708L632 717L637 727L642 737L645 749L648 763L651 778L653 793L655 807L658 820L660 832L663 842M670 860L675 870L680 880L685 892L691 905L696 918M433 367L439 375L446 384L453 394L462 406L470 418L479 431L488 444L496 455M511 474L517 481L521 488L525 496M529 514L530 526L531 538L532 551L533 563M536 583L539 592L543 600L547 608L553 617L559 628L567 641L574 654L582 669L590 683L597 695L604 707L611 717L616 726L622 735L626 745L630 756L633 769L636 783L639 797M644 824L647 836L650 846L654 855L658 864L663 872L668 882L674 893L679 906L685 919M424 369L429 377M444 395L452 406L460 419L469 432L478 445L486 457L494 467L500 476M514 499L516 508L518 518M521 555L522 568L523 580L525 590L528 599L532 607L537 615L543 625L549 635L556 647L564 661L572 675L579 689L586 702L593 714L600 724L606 733L611 742L615 751M622 773L626 786L629 800L632 814L635 827L638 839L642 849L646 858L651 866L656 874L661 883L666 894L672 906L677 919M413 371L419 379L426 387L433 396L442 407L450 419L459 432L468 445M483 469L489 479L495 487L499 495M505 511L507 521L508 533L509 546L510 560L511 573L513 585L515 596L518 606L522 614L527 623L533 632L540 642M554 668L562 682L569 696L577 709L583 721L590 731L595 740L600 748L605 757M613 778M620 804L623 817L627 830L631 841L635 851L639 860L644 868L649 876L654 885L659 895L665 906L670 919M393 364L398 373L404 381L410 389L418 398L426 408L435 420M452 446L460 459L467 471L473 482L478 491L482 499L486 508L488 517L490 527L492 539L493 552L494 566L496 580L498 594L501 605L505 616L509 625M520 643L527 653L534 665M549 691L556 705M570 731L576 741L581 750M596 774L600 784M608 808M616 834L620 845L625 855L630 864L635 871L640 879L645 887M655 907L661 919M380 366L385 375L391 383L398 390L406 399L414 409L423 420L431 433L439 447L447 460L454 473L460 484M470 503M478 532L480 544L481 557M485 586M491 613M500 634L505 643L511 652L518 662L525 673M539 699L546 713L553 726L560 738L566 748L571 757M586 781L590 790M599 812L604 825L608 837L613 848L618 858L623 867M633 881L638 889L643 898L648 908L653 920M370 377L376 385L384 393M400 410L408 421L417 434L425 448L432 462L439 475L445 488L451 499L455 508L459 518L461 527M466 550L468 564L470 578M476 608L480 621L484 633L489 644L495 653L501 662L508 672L515 683L521 695L528 708L535 721L542 735L548 747L554 757L559 766L564 774L569 781L574 788L579 796L584 806L588 817L593 829M603 852L608 862L614 871M624 885L628 893L633 901L637 911L642 922M365 388L372 395L380 403L389 412L397 423L406 436L414 449L421 464L428 478L434 491L439 502L444 513L448 523L451 533L453 543L456 555L458 569L461 584L464 599L468 614L472 628M482 652L487 661M500 680L506 690L513 702M526 728L532 741L538 753L544 764L549 773M559 787L564 794L569 802L574 811L579 821L584 832L589 844L595 856L600 866L605 875L610 883M619 897L624 904L627 914L631 925M372 406L380 415L388 426L397 438L405 451L412 466L419 480L425 494L430 506L435 517L438 528L442 538L445 548L448 560L450 574L453 588L457 604L461 619L465 634L470 647L475 658L481 668L487 677L493 686L499 696L505 707L511 720L517 733L523 746L529 758L534 769L539 778M549 793L554 799L560 807L565 815L570 825L575 836M586 859M597 879L601 887L606 894L610 901L614 909L617 918L621 929M369 420M386 442M400 470L407 485L413 499L418 512L422 524L426 535L430 545M437 567L440 580L443 594L447 610L451 625L455 640L460 653L466 665L471 676L477 685L482 694L488 703L494 714L499 726L505 738L510 751L515 764L520 775L525 785L530 793L535 799L540 806M557 830L562 841L568 852L573 864M588 893M596 908L599 916L602 924M370 434L378 446L386 459L393 474L399 488L405 503L410 516L414 529L418 539L422 550L425 560L429 571L432 584L436 598L440 613L444 629M453 657M464 680M474 698L480 707L485 717L490 729L495 741L500 754L505 767L509 778L514 788L519 796L524 804L530 810L535 817L541 824M552 844L558 856L564 867L569 879L574 889L578 898L582 906L586 914L589 921M367 453L374 466L380 480L386 495L392 510L397 524L401 536L405 547L409 558L413 568L416 578L420 590L424 604M432 633L437 648M447 675L451 685L456 695L461 703M470 721L475 732L479 744L483 757L488 770L492 782L497 792L502 801L507 809L513 816M524 830L531 839L537 849M554 885L559 897L563 906L567 915L570 923M366 470M378 499L383 514L388 528L392 541L397 552L400 562M408 583L412 594L416 607M425 636M434 664L439 677L443 688L448 697L452 706L457 714L461 723M469 745L473 758L477 771L482 783M491 804L497 812L502 819L508 826M521 842L527 853L534 864M545 889L550 901L554 912L558 921L561 929M367 505L372 520L376 534L381 547L385 558L389 569L393 578M401 599L405 611L410 624M419 653L423 667L428 679L432 690L436 700M448 725L452 735L456 746L459 759M468 784L473 796L478 806L483 815M496 830M509 846L516 857L522 869L528 882L534 895M543 918L547 928M369 553M386 593L390 603L394 614L399 627L404 641L408 655L413 669L417 681L421 692L425 702L429 710L432 718M439 736L443 747L446 759L450 772L455 785L460 798M471 818M484 834L491 842L498 851M512 873L518 886L524 900L529 913L533 925M366 591L371 600L375 609L380 619L385 631L390 643M399 670L403 683L407 694L411 704M417 720L420 728L423 737L427 748L430 760M439 786M450 811L456 821L463 830L470 838L478 847L486 856L493 867L500 879L507 893M518 921M366 613L371 622L376 633M390 672L394 684L398 695L401 705L404 713L407 721L410 729L413 738L417 748L420 760L424 773L429 787L434 800L441 813L447 823L454 833L462 842M478 860L486 871L493 883L500 897L506 911L511 926M367 635M377 660M386 685L389 696L393 706L396 715L399 723L401 730L404 739L408 749L411 761L415 774L420 788L426 801L432 814M447 836L455 845L463 854L471 864L479 875L487 887L494 901M368 662L372 674M380 698L383 708L386 717L389 724L391 732L394 741L397 750L401 762L406 775L411 789L416 803L423 816L431 829L438 839L447 849L455 859L464 868L472 879L480 892M367 688M374 710M379 727L381 735M387 753L391 764L395 777L401 791L407 805L414 819L422 832L430 844L438 854L447 864M464 885L472 897L479 911L484 926M367 722M372 738M378 756L381 767M391 793L398 808L405 822L413 836L421 848M456 890M470 916M366 761L369 771L374 784L379 798L386 812M401 841M428 877L437 887L445 897M458 922M366 804L373 818M389 848L397 861L406 873L415 884L424 895L431 905M444 929M369 839L377 854L386 867L395 880M419 911L426 922M366 859L374 873L383 886L392 897L400 907L407 917L414 927M373 891L381 902M397 921M368 909L377 918L384 927" stroke="#ffffff" stroke-width="1.25" fill="none" opacity="0.92"/>
<path d="M1009 364L1024 367M905 384L922 395L940 406L960 415L980 421M1020 427L1039 429L1057 432M734 373M763 388L778 392M825 395L840 398L856 404L871 412L886 422L901 432L917 440L934 447L951 454L968 459L986 466M1058 499M547 365M585 373L604 375L623 375L641 377L657 380L672 386L686 395L699 405L711 415L723 424L735 430M761 434L775 434L791 436L808 440L825 445M862 458L880 463M930 476L946 482M974 501L987 512M1027 538L1041 541M1069 543M429 366M460 376L476 382L492 389L508 397M558 412M611 412L629 415M678 439M705 457L718 462L729 466L741 469L753 471L765 474L779 478L794 484L810 489L827 493L845 496L864 498L882 499M934 513L948 523L962 534M985 554L996 560M1018 566L1030 568M1057 576M375 384L393 389L412 396L432 404M491 435L509 444M543 453L558 454M585 456M612 466L625 475M653 491L667 498M696 508L710 513M751 534M793 550L807 550M873 553L890 559L907 568M954 593L967 598L980 601M1014 614M1039 627L1054 632M387 416L404 424L423 435M501 474M550 483L564 486L576 491L586 498M617 518L628 523L640 528L653 533L668 539L683 548M716 569L734 579L750 586L767 590M843 596M873 610M904 623L920 628L935 632L951 636L966 641L981 647M1009 663M1051 677L1066 677M369 454L385 461M430 490L446 497L461 503L477 507M507 515L522 521M550 535L562 541L573 546L584 549M606 553L618 558M676 598L694 609L713 618L733 623M840 649L854 656M879 665M917 676L931 683L946 692L962 702M1028 728L1045 728L1060 728M392 514L406 521L420 526L433 531L445 535L458 539L470 545L482 553L495 561L509 568L523 574L537 577L551 578M580 578L595 581M624 595L639 606L655 617L671 626L688 634L706 641L724 646M763 656M800 671L817 678L833 684L848 689L861 691L873 693L885 695M906 707M944 740M1010 763M1063 772M374 558L390 561L406 564L419 568L432 573L443 581M465 599L477 607L489 613M516 616L532 615M584 620L603 627M674 656L690 661L706 666L722 672L738 680L753 688L769 698M800 712L815 715L829 717L843 717M869 723L881 730L893 739L904 750L916 761L928 770L941 778M988 794L1006 800L1025 807L1043 814L1061 821M403 608M445 638L457 647M481 657L494 659L507 659L522 660M593 677L613 682M652 688M687 695M717 710L730 720L742 730L754 738L765 744L776 747L788 748L801 748L814 749L827 752L842 758L856 766L871 774L886 783M930 801L945 807L961 815L976 824M1062 860M378 665M408 686M439 700L455 705M501 722M530 737L545 742L560 746M607 748L623 749M656 761L672 771L687 781L701 790M737 804M758 808L769 812M793 822L808 827L824 830L841 833M879 836L900 840L920 846M958 866L975 877L991 887L1006 894M1034 901L1047 902L1060 905M371 717M395 727L409 733M441 751L458 762M494 782M545 794L560 794L574 796L587 799L600 805M652 837L666 843L680 848L696 853L711 859M742 874L758 881M789 891M820 892L836 891M871 894L889 900L907 908L926 917L944 926M406 770L421 782M473 811L492 815L511 818L529 820L547 823M578 834M604 849L616 855M652 870M680 884L696 894L713 905L730 915L748 923L767 928M379 815L395 824M427 841L443 846L460 850L476 854M510 865L527 871L544 878L561 885L577 889M606 893M632 899L645 905L657 915L670 926M367 890M407 898L426 901M459 912" stroke="#ffffff" stroke-width="1.2" fill="none" opacity="0.8"/>
<path d="M382 475L386 458L389 442L392 429M400 406M368 645L375 633L384 619M411 577L420 562L427 547L434 532M449 506L458 493L467 482M484 460M496 438L499 425L500 411M505 379M366 745L374 735L382 725L391 716L400 708L410 698M436 663M454 615M465 579L474 561M497 529M524 503M544 481M558 448M562 421L566 405M368 868L374 850M394 783M408 759L418 748L429 738L441 729L452 720M475 686L479 672L482 657L486 641L491 624L498 607M533 556M570 513M603 444M632 381L639 365M426 874M432 832M443 808M463 785L475 773L486 761L496 748L504 734M514 702M520 667M530 631L538 614L547 598M604 524M633 486L643 471L654 455L663 438L671 421L677 403L682 386L685 370M482 883L485 868L489 854M503 830L513 820L522 810L532 799L540 788L548 776L554 762M565 730L571 711M584 672L591 653L598 634M609 601M618 575L623 564M650 535L662 525L676 514L689 503M715 460M723 427M732 396L739 381L748 366M532 917M548 884M564 855L571 841L577 828L583 815M603 772L612 757L622 742L633 726M659 680L664 666M667 641L668 630M674 609M690 587M724 547L734 531M756 479L761 462L767 445L773 430L781 415L789 402M807 379M572 927L583 913L593 900M607 878M619 844M633 817L643 802L655 786M692 733L701 717L708 701L713 687M721 653M730 635L737 626L745 616L753 605L761 592M775 560L781 542L788 523M803 483L812 464L821 446L830 430M843 401M852 378M627 911M638 890M645 872M657 852M677 828L689 814M714 783M753 702L759 688L766 675L773 663L780 651M793 627L798 614L802 600L806 584L811 568L818 552M835 517L846 500L857 483L867 468L874 453M883 427L885 415L887 403L890 392L894 379M677 910L683 899L689 888L697 875L706 862L716 847M734 817M760 770L769 755L779 741M802 715L812 703M835 663L839 648L842 632L845 616M884 526L896 510L907 496M929 455M934 437L938 428L943 417L950 404M967 374M764 835M777 797L786 779L797 763L810 748L824 735L837 724L849 713L859 702L866 692L871 681L875 669L878 655M888 624L896 607M928 554M955 509L962 496M978 467M991 447M1004 424M1017 379M817 913L818 896L819 879M826 844L832 827L841 811L852 796L863 782M885 756L894 744L902 732M916 708L923 695M939 667L948 652L957 637M973 607M986 580L993 568M1011 545L1022 534M1046 510L1057 497L1067 482M889 918L894 900L900 882L906 865L912 849M929 813L934 804L939 796L945 788M983 746L994 731L1004 715M1017 679L1021 660L1024 641M1031 606L1038 590L1048 576M979 912M990 871L992 858L994 846M1015 809M1037 780L1048 764L1057 747L1065 730M1027 917L1031 905L1034 893L1038 883M1058 849L1068 836M1067 919" stroke="#ffffff" stroke-width="1.2" fill="none" opacity="0.8"/>
<g fill="#b3dbb8"><polygon points="492,468 528,464 531,479 494,482" fill="#b3dbb8" /><polygon points="522,577 546,570 594,601 586,612 540,592" fill="#b3dbb8" /><polygon points="610,606 684,640 676,656 602,626" fill="#b3dbb8" /><polygon points="393,686 424,668 482,736 460,754" fill="#b3dbb8" /><polygon points="395,640 420,628 428,640 402,655" fill="#b3dbb8" /><polygon points="531,655 541,655 541,690 531,690" fill="#b3dbb8" /><polygon points="546,655 556,655 556,690 546,690" fill="#b3dbb8" /><polygon points="534,746 540,746 534,830 528,830" fill="#b3dbb8" /><polygon points="682,792 722,786 732,838 690,846" fill="#b3dbb8" /><polygon points="860,812 898,806 905,846 866,852" fill="#b3dbb8" /><polygon points="1022,440 1059,432 1059,482 1030,480" fill="#b3dbb8" /><polygon points="1038,520 1059,516 1059,552 1042,550" fill="#b3dbb8" /><polygon points="616,892 652,886 656,919 618,919" fill="#b3dbb8" /><polygon points="572,880 590,878 592,897 574,899" fill="#b3dbb8" /><polygon points="590,716 602,716 602,730 590,730" fill="#b3dbb8" /><polygon points="606,735 622,735 622,762 606,762" fill="#b3dbb8" /><polygon points="628,748 640,748 640,762 628,762" fill="#b3dbb8" /><polygon points="880,498 900,492 903,510 884,514" fill="#b3dbb8" /><polygon points="920,696 932,696 932,708 920,708" fill="#b3dbb8" /><polygon points="928,528 938,524 941,534 931,537" fill="#b3dbb8" /><polygon points="436,380 452,374 456,386 442,390" fill="#b3dbb8" /><polygon points="375,455 388,450 392,464 378,468" fill="#b3dbb8" /><polygon points="560,374 580,374 578,382 562,383" fill="#b3dbb8" /><polygon points="750,374 770,374 768,383 752,384" fill="#b3dbb8" /><polygon points="1003,900 1030,896 1034,919 1003,919" fill="#b3dbb8" /><polygon points="910,760 925,756 930,800 918,803" fill="#b3dbb8" /><polygon points="482,815 490,812 496,835 488,838" fill="#b3dbb8" /><polygon points="408,770 418,766 424,782 414,786" fill="#b3dbb8" /><polygon points="445,870 455,868 458,885 448,888" fill="#b3dbb8" /><polygon points="770,560 782,556 786,570 774,574" fill="#b3dbb8" /><polygon points="958,460 970,456 974,472 962,476" fill="#b3dbb8" /><polygon points="1000,560 1012,556 1016,570 1004,574" fill="#b3dbb8" /><polygon points="975,650 985,648 988,660 978,662" fill="#b3dbb8" /><polygon points="760,880 775,876 780,895 765,899" fill="#b3dbb8" /></g>
<path d="M368 692C372.0 687.3 383.0 672.3 392 664C401.0 655.7 411.5 647.2 422 642C432.5 636.8 438.7 634.8 455 633C471.3 631.2 499.2 631.2 520 631C540.8 630.8 565.0 630.0 580 632C595.0 634.0 600.0 638.3 610 643C620.0 647.7 627.7 654.3 640 660C652.3 665.7 669.0 672.0 684 677C699.0 682.0 715.7 685.8 730 690C744.3 694.2 763.3 700.0 770 702" stroke="#9cbef6" stroke-width="14" fill="none" stroke-linecap="butt" />
<path d="M770 702C775.0 704.3 790.0 710.8 800 716C810.0 721.2 820.3 727.7 830 733C839.7 738.3 849.7 742.7 858 748C866.3 753.3 876.3 762.2 880 765" stroke="#9cbef6" stroke-width="10" fill="none" stroke-linecap="butt" />
<path d="M758 698C760.3 703.0 765.3 718.8 772 728C778.7 737.2 788.3 745.8 798 753C807.7 760.2 820.0 766.5 830 771C840.0 775.5 849.0 779.5 858 780C867.0 780.5 879.7 775.0 884 774" stroke="#9cbef6" stroke-width="9" fill="none" stroke-linecap="butt" />
<path d="M812 742C815.0 741.3 824.3 737.0 830 738C835.7 739.0 843.3 746.3 846 748" stroke="#9cbef6" stroke-width="5" fill="none" stroke-linecap="butt" />
<path d="M880 768C881.8 772.8 885.7 788.3 891 797C896.3 805.7 904.7 812.3 912 820C919.3 827.7 927.5 834.2 935 843C942.5 851.8 947.5 859.3 957 873C966.5 886.7 986.2 916.3 992 925" stroke="#9cbef6" stroke-width="17" fill="none" stroke-linecap="butt" />
<path d="M918 800C919.3 793.3 923.7 769.7 926 760C928.3 750.3 931.0 745.0 932 742" stroke="#9cbef6" stroke-width="5" fill="none" stroke-linecap="butt" />
<path d="M949 419C944.5 426.0 930.2 446.3 922 461C913.8 475.7 903.7 497.3 900 507C896.3 516.7 896.8 509.8 900 519C903.2 528.2 914.0 551.0 919 562C924.0 573.0 927.5 572.0 930 585C932.5 598.0 933.3 630.8 934 640" stroke="#9dbdf3" stroke-width="2.2" fill="none" stroke-linecap="butt" />
<path d="M1000 368C995.8 372.0 983.2 384.7 975 392C966.8 399.3 955.0 408.7 951 412" stroke="#9dbdf3" stroke-width="9" fill="none" stroke-linecap="butt" />
<path d="M375 452C379.5 446.7 391.2 432.0 402 420C412.8 408.0 432.7 387.7 440 380C447.3 372.3 445.0 375.0 446 374" stroke="#ffffff" stroke-width="3" fill="none" stroke-linecap="round" />
<path d="M413 520C417.5 511.7 430.5 488.3 440 470C449.5 451.7 462.3 426.0 470 410C477.7 394.0 483.3 380.0 486 374" stroke="#ffffff" stroke-width="3" fill="none" stroke-linecap="round" />
<path d="M375 470C381.3 478.3 406.7 511.7 413 520" stroke="#ffffff" stroke-width="3" fill="none" stroke-linecap="round" />
<path d="M375 530C381.3 528.3 406.7 521.7 413 520" stroke="#ffffff" stroke-width="3" fill="none" stroke-linecap="round" />
<path d="M380 580C385.5 570.0 407.5 530.0 413 520" stroke="#ffffff" stroke-width="2.5" fill="none" stroke-linecap="round" />
<path d="M413 520C410.8 533.3 403.0 580.0 400 600C397.0 620.0 395.8 633.3 395 640" stroke="#ffffff" stroke-width="3" fill="none" stroke-linecap="round" />
<path d="M413 520C420.0 530.0 445.5 561.7 455 580C464.5 598.3 467.5 621.7 470 630" stroke="#ffffff" stroke-width="2.5" fill="none" stroke-linecap="round" />
<path d="M413 520C422.5 524.2 445.5 534.2 470 545C494.5 555.8 531.7 574.8 560 585C588.3 595.2 626.7 602.5 640 606" stroke="#ffffff" stroke-width="3.5" fill="none" stroke-linecap="round" />
<path d="M413 520C424.2 516.7 455.5 508.3 480 500C504.5 491.7 533.3 477.5 560 470C586.7 462.5 615.0 460.0 640 455C665.0 450.0 698.3 442.5 710 440" stroke="#ffffff" stroke-width="3" fill="none" stroke-linecap="round" />
<path d="M640 606C650.0 610.3 676.7 621.7 700 632C723.3 642.3 755.0 656.7 780 668C805.0 679.3 825.0 691.0 850 700C875.0 709.0 916.7 718.3 930 722" stroke="#ffffff" stroke-width="3" fill="none" stroke-linecap="round" />
<path d="M560 470C566.7 475.0 583.3 487.5 600 500C616.7 512.5 643.3 535.0 660 545C676.7 555.0 680.0 555.0 700 560C720.0 565.0 755.0 570.0 780 575C805.0 580.0 828.3 582.5 850 590C871.7 597.5 896.7 598.0 910 620C923.3 642.0 926.7 705.0 930 722" stroke="#ffffff" stroke-width="3" fill="none" stroke-linecap="round" />
<path d="M600 374C606.7 387.5 630.0 426.5 640 455C650.0 483.5 660.0 519.8 660 545C660.0 570.2 643.3 595.8 640 606" stroke="#ffffff" stroke-width="2.5" fill="none" stroke-linecap="round" />
<path d="M710 440C726.7 436.3 778.3 423.3 810 418C841.7 412.7 875.0 412.3 900 408C925.0 403.7 941.7 397.7 960 392C978.3 386.3 1001.7 377.0 1010 374" stroke="#ffffff" stroke-width="3.5" fill="none" stroke-linecap="round" />
<path d="M830 374C829.7 390.0 829.3 439.0 828 470C826.7 501.0 824.2 530.0 822 560C819.8 590.0 817.7 624.0 815 650C812.3 676.0 807.5 705.0 806 716" stroke="#ffffff" stroke-width="3" fill="none" stroke-linecap="round" />
<path d="M870 470C868.3 485.0 863.3 540.0 860 560C856.7 580.0 851.7 585.0 850 590" stroke="#ffffff" stroke-width="2.5" fill="none" stroke-linecap="round" />
<path d="M905 415C907.5 425.8 915.0 455.8 920 480C925.0 504.2 933.3 533.3 935 560C936.7 586.7 930.8 613.0 930 640C929.2 667.0 930.0 708.3 930 722" stroke="#ffffff" stroke-width="3" fill="none" stroke-linecap="round" />
<path d="M960 392C955.8 420.0 939.2 532.0 935 560" stroke="#ffffff" stroke-width="2.5" fill="none" stroke-linecap="round" />
<path d="M930 722C940.0 716.7 968.5 703.7 990 690C1011.5 676.3 1047.5 648.3 1059 640" stroke="#ffffff" stroke-width="3" fill="none" stroke-linecap="round" />
<path d="M930 722C941.7 728.3 978.5 747.0 1000 760C1021.5 773.0 1049.2 793.3 1059 800" stroke="#ffffff" stroke-width="3" fill="none" stroke-linecap="round" />
<path d="M930 722C951.5 718.3 1037.5 703.7 1059 700" stroke="#ffffff" stroke-width="2.5" fill="none" stroke-linecap="round" />
<path d="M910 620C921.7 616.7 955.2 610.0 980 600C1004.8 590.0 1045.8 566.7 1059 560" stroke="#ffffff" stroke-width="3" fill="none" stroke-linecap="round" />
<path d="M850 590C865.0 578.3 905.2 543.3 940 520C974.8 496.7 1039.2 461.7 1059 450" stroke="#ffffff" stroke-width="2.5" fill="none" stroke-linecap="round" />
<path d="M640 606C639.3 615.0 636.0 641.0 636 660C636.0 679.0 636.0 698.3 640 720C644.0 741.7 650.0 763.3 660 790C670.0 816.7 693.3 865.0 700 880" stroke="#ffffff" stroke-width="3" fill="none" stroke-linecap="round" />
<path d="M636 662C645.0 668.3 672.7 687.0 690 700C707.3 713.0 723.3 730.0 740 740C756.7 750.0 771.7 754.0 790 760C808.3 766.0 834.3 774.0 850 776C865.7 778.0 878.3 772.7 884 772" stroke="#ffffff" stroke-width="3" fill="none" stroke-linecap="round" />
<path d="M806 716C804.2 723.3 799.3 741.0 795 760C790.7 779.0 784.2 808.3 780 830C775.8 851.7 773.3 875.2 770 890C766.7 904.8 761.7 914.2 760 919" stroke="#ffffff" stroke-width="3" fill="none" stroke-linecap="round" />
<path d="M540 690C540.0 699.2 535.0 726.7 540 745C545.0 763.3 553.3 782.5 570 800C586.7 817.5 618.3 836.7 640 850C661.7 863.3 675.0 871.7 700 880C725.0 888.3 763.3 893.5 790 900C816.7 906.5 848.3 915.8 860 919" stroke="#ffffff" stroke-width="3" fill="none" stroke-linecap="round" />
<path d="M375 760C384.2 765.0 414.2 783.3 430 790C445.8 796.7 448.3 790.0 470 800C491.7 810.0 538.3 830.2 560 850C581.7 869.8 593.3 907.5 600 919" stroke="#ffffff" stroke-width="3" fill="none" stroke-linecap="round" />
<path d="M414 720C420.0 728.3 437.3 753.3 450 770C462.7 786.7 478.3 803.3 490 820C501.7 836.7 511.7 853.5 520 870C528.3 886.5 536.7 910.8 540 919" stroke="#ffffff" stroke-width="2.5" fill="none" stroke-linecap="round" />
<path d="M478 736C488.3 737.5 529.7 743.5 540 745" stroke="#ffffff" stroke-width="2.5" fill="none" stroke-linecap="round" />
<path d="M375 830C390.8 825.0 454.2 805.0 470 800" stroke="#ffffff" stroke-width="2.5" fill="none" stroke-linecap="round" />
<path d="M470 800C475.0 793.3 488.3 769.2 500 760C511.7 750.8 533.3 747.5 540 745" stroke="#ffffff" stroke-width="2.5" fill="none" stroke-linecap="round" />
<path d="M884 772C886.7 780.0 899.0 803.7 900 820C901.0 836.3 893.3 853.5 890 870C886.7 886.5 881.7 910.8 880 919" stroke="#ffffff" stroke-width="3" fill="none" stroke-linecap="round" />
<path d="M860 852C876.7 848.3 926.8 840.3 960 830C993.2 819.7 1042.5 796.7 1059 790" stroke="#ffffff" stroke-width="2.5" fill="none" stroke-linecap="round" />
<path d="M640 850C636.7 861.5 623.3 907.5 620 919" stroke="#ffffff" stroke-width="2.5" fill="none" stroke-linecap="round" />
<path d="M570 800C558.3 813.3 516.7 860.2 500 880C483.3 899.8 475.0 912.5 470 919" stroke="#ffffff" stroke-width="2.5" fill="none" stroke-linecap="round" />
<path d="M455 633C454.2 644.2 456.8 685.5 450 700C443.2 714.5 420.0 716.7 414 720" stroke="#ffffff" stroke-width="2.5" fill="none" stroke-linecap="round" />
<path d="M583 632C581.7 641.7 582.2 680.3 575 690C567.8 699.7 545.8 690.0 540 690" stroke="#ffffff" stroke-width="2.5" fill="none" stroke-linecap="round" />
<path d="M700 374C700.8 385.0 705.0 409.0 705 440C705.0 471.0 700.8 540.0 700 560" stroke="#ffffff" stroke-width="2.5" fill="none" stroke-linecap="round" />
<path d="M760 374C761.7 390.0 766.7 436.5 770 470C773.3 503.5 778.3 557.5 780 575" stroke="#ffffff" stroke-width="2.5" fill="none" stroke-linecap="round" />
<path d="M520 374C523.3 385.0 533.3 424.0 540 440C546.7 456.0 556.7 465.0 560 470" stroke="#ffffff" stroke-width="2.5" fill="none" stroke-linecap="round" />
<path d="M944 862C953.3 858.3 980.8 848.7 1000 840C1019.2 831.3 1049.2 815.0 1059 810" stroke="#ffffff" stroke-width="2.5" fill="none" stroke-linecap="round" />
<path d="M451.4 624.1L454.6 641.9" stroke="#ffffff" stroke-width="2.2"/>
<path d="M489.7 622.0L490.3 640.0" stroke="#ffffff" stroke-width="2.2"/>
<path d="M533.0 622.0L533.0 640.0" stroke="#ffffff" stroke-width="2.2"/>
<path d="M579.9 623.5L586.1 640.5" stroke="#ffffff" stroke-width="2.2"/>
<path d="M616.8 642.6L627.2 657.4" stroke="#ffffff" stroke-width="2.2"/>
<path d="M657.8 661.1L666.2 676.9" stroke="#ffffff" stroke-width="2.2"/>
<path d="M696.2 673.8L703.8 690.2" stroke="#ffffff" stroke-width="2.2"/>
<path d="M731.6 683.7L738.4 700.3" stroke="#ffffff" stroke-width="2.2"/>
<path d="M785.5 704.2L794.5 719.8" stroke="#ffffff" stroke-width="2.2"/>
<path d="M810.2 719.4L819.8 734.6" stroke="#ffffff" stroke-width="2.2"/>
<path d="M842.8 736.6L853.2 751.4" stroke="#ffffff" stroke-width="2.2"/>
<path d="M911.9 809.2L898.1 820.8" stroke="#ffffff" stroke-width="2.2"/>
<path d="M964.9 872.2L951.1 883.8" stroke="#ffffff" stroke-width="2.2"/>
<path d="M370 392L398 368" stroke="#f6cf65" stroke-width="4"/><path d="M370 400L405 370" stroke="#fbe3a0" stroke-width="3"/>
<rect x="427.5" y="389.5" width="15" height="15" rx="2.6" fill="#1a73d9" stroke="#fff" stroke-width=".8"/><rect x="430.8" y="392" width="8.4" height="8.6" rx="1.8" fill="#fff"/><rect x="432" y="393.4" width="2.5" height="3" fill="#1a73d9"/><rect x="435.5" y="393.4" width="2.5" height="3" fill="#1a73d9"/><rect x="431.6" y="400.8" width="2" height="1.6" fill="#fff"/><rect x="436.4" y="400.8" width="2" height="1.6" fill="#fff"/>
<rect x="621.5" y="477.5" width="15" height="15" rx="2.6" fill="#1a73d9" stroke="#fff" stroke-width=".8"/><rect x="624.8" y="480" width="8.4" height="8.6" rx="1.8" fill="#fff"/><rect x="626" y="481.4" width="2.5" height="3" fill="#1a73d9"/><rect x="629.5" y="481.4" width="2.5" height="3" fill="#1a73d9"/><rect x="625.6" y="488.8" width="2" height="1.6" fill="#fff"/><rect x="630.4" y="488.8" width="2" height="1.6" fill="#fff"/>
<rect x="867.5" y="482.5" width="15" height="15" rx="2.6" fill="#1a73d9" stroke="#fff" stroke-width=".8"/><rect x="870.8" y="485" width="8.4" height="8.6" rx="1.8" fill="#fff"/><rect x="872" y="486.4" width="2.5" height="3" fill="#1a73d9"/><rect x="875.5" y="486.4" width="2.5" height="3" fill="#1a73d9"/><rect x="871.6" y="493.8" width="2" height="1.6" fill="#fff"/><rect x="876.4" y="493.8" width="2" height="1.6" fill="#fff"/>
<rect x="583.5" y="869.5" width="15" height="15" rx="2.6" fill="#1a73d9" stroke="#fff" stroke-width=".8"/><rect x="586.8" y="872" width="8.4" height="8.6" rx="1.8" fill="#fff"/><rect x="588" y="873.4" width="2.5" height="3" fill="#1a73d9"/><rect x="591.5" y="873.4" width="2.5" height="3" fill="#1a73d9"/><rect x="587.6" y="880.8" width="2" height="1.6" fill="#fff"/><rect x="592.4" y="880.8" width="2" height="1.6" fill="#fff"/>
<rect x="975.5" y="833.5" width="15" height="15" rx="2.6" fill="#1a73d9" stroke="#fff" stroke-width=".8"/><rect x="978.8" y="836" width="8.4" height="8.6" rx="1.8" fill="#fff"/><rect x="980" y="837.4" width="2.5" height="3" fill="#1a73d9"/><rect x="983.5" y="837.4" width="2.5" height="3" fill="#1a73d9"/><rect x="979.6" y="844.8" width="2" height="1.6" fill="#fff"/><rect x="984.4" y="844.8" width="2" height="1.6" fill="#fff"/>
<rect x="1030.5" y="888.5" width="15" height="15" rx="2.6" fill="#1a73d9" stroke="#fff" stroke-width=".8"/><rect x="1033.8" y="891" width="8.4" height="8.6" rx="1.8" fill="#fff"/><rect x="1035" y="892.4" width="2.5" height="3" fill="#1a73d9"/><rect x="1038.5" y="892.4" width="2.5" height="3" fill="#1a73d9"/><rect x="1034.6" y="899.8" width="2" height="1.6" fill="#fff"/><rect x="1039.4" y="899.8" width="2" height="1.6" fill="#fff"/>
<circle cx="655" cy="498" r="4.1" fill="#fff" stroke="#27307e" stroke-width="1.4"/><rect x="651.2" y="496.9" width="7.6" height="2.1" fill="#27307e"/>
<circle cx="857" cy="447" r="4.1" fill="#fff" stroke="#27307e" stroke-width="1.4"/><rect x="853.2" y="445.9" width="7.6" height="2.1" fill="#27307e"/>
<circle cx="861" cy="489" r="4.1" fill="#fff" stroke="#27307e" stroke-width="1.4"/><rect x="857.2" y="487.9" width="7.6" height="2.1" fill="#27307e"/>
<circle cx="457" cy="645" r="4.1" fill="#fff" stroke="#27307e" stroke-width="1.4"/><rect x="453.2" y="643.9" width="7.6" height="2.1" fill="#27307e"/>
<circle cx="555" cy="650" r="4.1" fill="#fff" stroke="#27307e" stroke-width="1.4"/><rect x="551.2" y="648.9" width="7.6" height="2.1" fill="#27307e"/>
<circle cx="637" cy="665" r="4.1" fill="#fff" stroke="#27307e" stroke-width="1.4"/><rect x="633.2" y="663.9" width="7.6" height="2.1" fill="#27307e"/>
<circle cx="783" cy="652" r="4.1" fill="#fff" stroke="#27307e" stroke-width="1.4"/><rect x="779.2" y="650.9" width="7.6" height="2.1" fill="#27307e"/>
<circle cx="970" cy="840" r="4.1" fill="#fff" stroke="#27307e" stroke-width="1.4"/><rect x="966.2" y="838.9" width="7.6" height="2.1" fill="#27307e"/>
<circle cx="705" cy="888" r="4.1" fill="#fff" stroke="#27307e" stroke-width="1.4"/><rect x="701.2" y="886.9" width="7.6" height="2.1" fill="#27307e"/>
<path d="M745 374H757L751 386Z" fill="#667a86"/>
<text x="627" y="382" font-size="17" fill="#4d5156" textLength="112" lengthAdjust="spacing" stroke="#fff" stroke-width="3" stroke-linejoin="round" paint-order="stroke">de Montmartre</text>
<text x="386" y="446" font-size="12.1" fill="#5f6368" textLength="62" lengthAdjust="spacing" transform="rotate(-40 386 446)" stroke="#fff" stroke-width="3" stroke-linejoin="round" paint-order="stroke">Bd Pereire</text>
<text x="449" y="467" font-size="12.1" fill="#5f6368" textLength="84" lengthAdjust="spacing" transform="rotate(-68 449 467)" stroke="#fff" stroke-width="3" stroke-linejoin="round" paint-order="stroke">Av. de Wagram</text>
<text x="375" y="464" font-size="12.1" fill="#5f6368" textLength="54" lengthAdjust="spacing" transform="rotate(13 375 464)" stroke="#fff" stroke-width="3" stroke-linejoin="round" paint-order="stroke">es Ternes</text>
<text x="458" y="469" font-size="16.9" fill="#2c8a4e" textLength="110" lengthAdjust="spacing" stroke="#fff" stroke-width="3" stroke-linejoin="round" paint-order="stroke">Parc Monceau</text>
<text x="682" y="473" font-size="15" fill="#33373b" textLength="70" lengthAdjust="spacing" stroke="#fff" stroke-width="3" stroke-linejoin="round" paint-order="stroke">9E ARR.</text>
<text x="792" y="477" font-size="15" fill="#33373b" textLength="83" lengthAdjust="spacing" stroke="#fff" stroke-width="3" stroke-linejoin="round" paint-order="stroke">10E ARR.</text>
<text x="808" y="417" font-size="12.1" fill="#5f6368" textLength="92" lengthAdjust="spacing" transform="rotate(-4 808 417)" stroke="#fff" stroke-width="3" stroke-linejoin="round" paint-order="stroke">Bd de la Chapelle</text>
<text x="795" y="376" font-size="12.1" fill="#5f6368" textLength="28" lengthAdjust="spacing" transform="rotate(90 795 376)" stroke="#fff" stroke-width="3" stroke-linejoin="round" paint-order="stroke">urbès</text>
<text x="998" y="410" font-size="12.1" fill="#5f6368" textLength="24" lengthAdjust="spacing" transform="rotate(-18 998 410)" stroke="#fff" stroke-width="3" stroke-linejoin="round" paint-order="stroke">Av. J</text>
<text x="1003" y="447" font-size="16.9" fill="#2c8a4e" textLength="60" lengthAdjust="spacing" stroke="#fff" stroke-width="3" stroke-linejoin="round" paint-order="stroke">Parc de</text>
<text x="971" y="464" font-size="16.9" fill="#2c8a4e" textLength="92" lengthAdjust="spacing" stroke="#fff" stroke-width="3" stroke-linejoin="round" paint-order="stroke">Buttes-Chau</text>
<text x="1022" y="496" font-size="16.9" fill="#2c8a4e" textLength="36" lengthAdjust="spacing" stroke="#fff" stroke-width="3" stroke-linejoin="round" paint-order="stroke">Parc</text>
<text x="1016" y="513" font-size="16.9" fill="#2c8a4e" textLength="46" lengthAdjust="spacing" stroke="#fff" stroke-width="3" stroke-linejoin="round" paint-order="stroke">Bellev</text>
<text x="375" y="512" font-size="16.9" fill="#1a8797" textLength="24" lengthAdjust="spacing" stroke="#fff" stroke-width="3" stroke-linejoin="round" paint-order="stroke">phe</text>
<text x="439" y="563" font-size="16.9" fill="#1a8797" textLength="52" lengthAdjust="spacing" stroke="#fff" stroke-width="3" stroke-linejoin="round" paint-order="stroke">Galerie</text>
<text x="353.8" y="581" font-size="15" fill="#33373b" textLength="75.2" lengthAdjust="spacing" stroke="#fff" stroke-width="3" stroke-linejoin="round" paint-order="stroke">CHAILLOT</text>
<text x="495" y="626" font-size="16.9" fill="#1a8797" textLength="86" lengthAdjust="spacing" stroke="#fff" stroke-width="3" stroke-linejoin="round" paint-order="stroke">Petit Palais</text>
<text x="615" y="601" font-size="16.9" fill="#1a8797" textLength="65" lengthAdjust="spacing" stroke="#fff" stroke-width="3" stroke-linejoin="round" paint-order="stroke">Place de</text>
<text x="712" y="601" font-size="16.9" fill="#1a8797" textLength="64" lengthAdjust="spacing" stroke="#fff" stroke-width="3" stroke-linejoin="round" paint-order="stroke">oncorde</text>
<text x="765" y="534" font-size="16.9" fill="#1a8797" textLength="103" lengthAdjust="spacing" stroke="#fff" stroke-width="3" stroke-linejoin="round" paint-order="stroke">Musée Grévin</text>
<text x="792" y="625" font-size="16.9" fill="#1a8797" textLength="154" lengthAdjust="spacing" stroke="#fff" stroke-width="3" stroke-linejoin="round" paint-order="stroke">Le Centre Pompidou</text>
<text x="375" y="645" font-size="16.9" fill="#1a8797" textLength="43" lengthAdjust="spacing" stroke="#fff" stroke-width="3" stroke-linejoin="round" paint-order="stroke">Branly</text>
<text x="375" y="662" font-size="16.9" fill="#1a8797" textLength="45" lengthAdjust="spacing" stroke="#fff" stroke-width="3" stroke-linejoin="round" paint-order="stroke">Chirac</text>
<text x="470" y="652" font-size="12.1" fill="#5f6368" textLength="68" lengthAdjust="spacing" transform="rotate(-5 470 652)" stroke="#fff" stroke-width="3" stroke-linejoin="round" paint-order="stroke">Quai d&#x27;Orsay</text>
<text x="571" y="656" font-size="16.9" fill="#1a8797" textLength="130" lengthAdjust="spacing" stroke="#fff" stroke-width="3" stroke-linejoin="round" paint-order="stroke">Musée du Louvre</text>
<defs><path id="rsd" d="M487 682Q540 662 597 684"/></defs>
<text font-size="12.5" fill="#5f6368" stroke="#fff" stroke-width="3" paint-order="stroke" stroke-linejoin="round"><textPath href="#rsd" textLength="116" lengthAdjust="spacing">Rue Saint-Dominique</textPath></text>
<text x="554" y="707" font-size="16.9" fill="#1a8797" textLength="136" lengthAdjust="spacing" stroke="#fff" stroke-width="3" stroke-linejoin="round" paint-order="stroke">Musée de l&#x27;Armée</text>
<text x="378" y="726" font-size="16.9" fill="#2c8a4e" textLength="120" lengthAdjust="spacing" stroke="#fff" stroke-width="3" stroke-linejoin="round" paint-order="stroke">Champ-de-Mars</text>
<text x="502" y="745" font-size="15" fill="#33373b" textLength="71" lengthAdjust="spacing" stroke="#fff" stroke-width="3" stroke-linejoin="round" paint-order="stroke">7E ARR.</text>
<text x="426" y="744" font-size="12.1" fill="#5f6368" textLength="76" lengthAdjust="spacing" transform="rotate(50 426 744)" stroke="#fff" stroke-width="3" stroke-linejoin="round" paint-order="stroke">Av. de Suffren</text>
<text x="378" y="760" font-size="12.1" fill="#5f6368" textLength="76" lengthAdjust="spacing" transform="rotate(33 378 760)" stroke="#fff" stroke-width="3" stroke-linejoin="round" paint-order="stroke">Bd de Grenelle</text>
<text x="463" y="808" font-size="12.1" fill="#5f6368" textLength="66" lengthAdjust="spacing" transform="rotate(25 463 808)" stroke="#fff" stroke-width="3" stroke-linejoin="round" paint-order="stroke">Bd Garibaldi</text>
<text x="375" y="818" font-size="12.1" fill="#5f6368" textLength="17" lengthAdjust="spacing" stroke="#fff" stroke-width="3" stroke-linejoin="round" paint-order="stroke">ola</text>
<text x="365.1" y="870" font-size="15" fill="#33373b" textLength="72.9" lengthAdjust="spacing" stroke="#fff" stroke-width="3" stroke-linejoin="round" paint-order="stroke">5E ARR.</text>
<text x="911" y="685" font-size="16.9" fill="#1a8797" textLength="137" lengthAdjust="spacing" stroke="#fff" stroke-width="3" stroke-linejoin="round" paint-order="stroke">Musée Carnavalet</text>
<text x="911" y="702" font-size="16.9" fill="#1a8797" textLength="134" lengthAdjust="spacing" stroke="#fff" stroke-width="3" stroke-linejoin="round" paint-order="stroke">- Histoire de Paris</text>
<text x="785.5" y="717.5" font-size="28.5" fill="#222" textLength="70" lengthAdjust="spacing" font-weight="700" stroke="#fff" stroke-width="3.5" stroke-linejoin="round" paint-order="stroke">Paris</text>
<text x="956" y="735" font-size="16.9" fill="#1a8797" textLength="104" lengthAdjust="spacing" stroke="#fff" stroke-width="3" stroke-linejoin="round" paint-order="stroke">Place de la Ba</text>
<text x="769" y="737" font-size="12.5" fill="#3c78d8" textLength="30" lengthAdjust="spacing" transform="rotate(25 769 737)" font-style="italic">Seine</text>
<text x="707" y="776" font-size="14" fill="#33373b" textLength="113" lengthAdjust="spacing" stroke="#fff" stroke-width="3" stroke-linejoin="round" paint-order="stroke">QUARTIER LAT</text>
<text x="910" y="770" font-size="16.9" fill="#2c8a4e" textLength="90" lengthAdjust="spacing" stroke="#fff" stroke-width="3" stroke-linejoin="round" paint-order="stroke">Coulée verte</text>
<text x="906" y="788" font-size="16.9" fill="#2c8a4e" textLength="92" lengthAdjust="spacing" stroke="#fff" stroke-width="3" stroke-linejoin="round" paint-order="stroke">René-Dumon</text>
<text x="794" y="810" font-size="16.9" fill="#1a8797" textLength="72" lengthAdjust="spacing" stroke="#fff" stroke-width="3" stroke-linejoin="round" paint-order="stroke">Panthéon</text>
<text x="672" y="818" font-size="16.9" fill="#2c8a4e" textLength="70" lengthAdjust="spacing" stroke="#fff" stroke-width="3" stroke-linejoin="round" paint-order="stroke">Jardin du</text>
<text x="660" y="835" font-size="16.9" fill="#2c8a4e" textLength="95" lengthAdjust="spacing" stroke="#fff" stroke-width="3" stroke-linejoin="round" paint-order="stroke">Luxembourg</text>
<text x="621" y="855" font-size="16.9" fill="#1a8797" textLength="149" lengthAdjust="spacing" stroke="#fff" stroke-width="3" stroke-linejoin="round" paint-order="stroke">Tour Montparnasse</text>
<text x="820" y="822" font-size="12.1" fill="#5f6368" textLength="60" lengthAdjust="spacing" transform="rotate(88 820 822)" stroke="#fff" stroke-width="3" stroke-linejoin="round" paint-order="stroke">Rue Monge</text>
<text x="842" y="853" font-size="16.9" fill="#2c8a4e" textLength="80" lengthAdjust="spacing" stroke="#fff" stroke-width="3" stroke-linejoin="round" paint-order="stroke">Jardin des</text>
<text x="854" y="870" font-size="16.9" fill="#2c8a4e" textLength="56" lengthAdjust="spacing" stroke="#fff" stroke-width="3" stroke-linejoin="round" paint-order="stroke">Plantes</text>
<text x="899" y="893" font-size="16.9" fill="#2c8a4e" textLength="92" lengthAdjust="spacing" stroke="#fff" stroke-width="3" stroke-linejoin="round" paint-order="stroke">Accor Arena</text>
<text x="722" y="899" font-size="12.1" fill="#5f6368" textLength="88" lengthAdjust="spacing" transform="rotate(12 722 899)" stroke="#fff" stroke-width="3" stroke-linejoin="round" paint-order="stroke">Bd de Port-Royal</text>
<text x="1013" y="845" font-size="12.1" fill="#5f6368" textLength="50" lengthAdjust="spacing" transform="rotate(31 1013 845)" stroke="#fff" stroke-width="3" stroke-linejoin="round" paint-order="stroke">Daumesn</text>
<text x="1046" y="816" font-size="12.1" fill="#5f6368" textLength="14" lengthAdjust="spacing" transform="rotate(-14 1046 816)" stroke="#fff" stroke-width="3" stroke-linejoin="round" paint-order="stroke">ide</text>
<path d="M400.8 499A12.2 12.2 0 1 1 425.2 499C425.2 507 417 513 413 522.5C409 513 400.8 507 400.8 499Z" fill="#16a3b5" stroke="#fff" stroke-width="1"/><g fill="#fff"><path d="M412 491.6H414L415.2 501.6H410.8Z"/><rect x="409.4" y="502" width="7.2" height="2"/><rect x="408" y="504.2" width="10" height="1.6"/></g>
<path d="M484.8 576A12.2 12.2 0 1 1 509.2 576C509.2 584 501 590 497 599.5C493 590 484.8 584 484.8 576Z" fill="#16a3b5" stroke="#fff" stroke-width="1"/><g fill="#fff"><path d="M490.5 573.8L497 569.4L503.5 573.8V575H490.5Z"/><rect x="490.5" y="580.4" width="13" height="1.6"/><rect x="491.4" y="575.4" width="1.5" height="4.6"/><rect x="501.1" y="575.4" width="1.5" height="4.6"/></g><text x="497" y="580" font-size="6.2" font-weight="700" fill="#fff" text-anchor="middle">M</text>
<path d="M539.8 583A12.2 12.2 0 1 1 564.2 583C564.2 591 556 597 552 606.5C548 597 539.8 591 539.8 583Z" fill="#16a3b5" stroke="#fff" stroke-width="1"/><g fill="#fff"><path d="M545.5 580.8L552 576.4L558.5 580.8V582H545.5Z"/><rect x="545.5" y="587.4" width="13" height="1.6"/><rect x="546.4" y="582.4" width="1.5" height="4.6"/><rect x="556.1" y="582.4" width="1.5" height="4.6"/></g><text x="552" y="587" font-size="6.2" font-weight="700" fill="#fff" text-anchor="middle">M</text>
<path d="M586.8 590A12.2 12.2 0 1 1 611.2 590C611.2 598 603 604 599 613.5C595 604 586.8 598 586.8 590Z" fill="#16a3b5" stroke="#fff" stroke-width="1"/><g fill="#fff"><path d="M593.5 586.8H596.4L597.6 585.2H602L603.2 586.8H605.5V595H593.5Z"/><path d="M591.4 583.6h1.2v1.2h1.2v1.2h-1.2v1.2h-1.2v-1.2h-1.2v-1.2h1.2z"/></g><circle cx="599.8" cy="590.8" r="2.5" fill="#16a3b5"/><circle cx="599.8" cy="590.8" r="1.3" fill="#fff"/>
<path d="M736.8 520A12.2 12.2 0 1 1 761.2 520C761.2 528 753 534 749 543.5C745 534 736.8 528 736.8 520Z" fill="#16a3b5" stroke="#fff" stroke-width="1"/><g fill="#fff"><path d="M742.5 517.8L749 513.4L755.5 517.8V519H742.5Z"/><rect x="742.5" y="524.4" width="13" height="1.6"/><rect x="743.4" y="519.4" width="1.5" height="4.6"/><rect x="753.1" y="519.4" width="1.5" height="4.6"/></g><text x="749" y="524" font-size="6.2" font-weight="700" fill="#fff" text-anchor="middle">M</text>
<path d="M807.8 643A12.2 12.2 0 1 1 832.2 643C832.2 651 824 657 820 666.5C816 657 807.8 651 807.8 643Z" fill="#16a3b5" stroke="#fff" stroke-width="1"/><g fill="#fff"><path d="M813.5 640.8L820 636.4L826.5 640.8V642H813.5Z"/><rect x="813.5" y="647.4" width="13" height="1.6"/><rect x="814.4" y="642.4" width="1.5" height="4.6"/><rect x="824.1" y="642.4" width="1.5" height="4.6"/></g><text x="820" y="647" font-size="6.2" font-weight="700" fill="#fff" text-anchor="middle">M</text>
<path d="M420.8 641A12.2 12.2 0 1 1 445.2 641C445.2 649 437 655 433 664.5C429 655 420.8 649 420.8 641Z" fill="#16a3b5" stroke="#fff" stroke-width="1"/><g fill="#fff"><path d="M426.5 638.8L433 634.4L439.5 638.8V640H426.5Z"/><rect x="426.5" y="645.4" width="13" height="1.6"/><rect x="427.4" y="640.4" width="1.5" height="4.6"/><rect x="437.1" y="640.4" width="1.5" height="4.6"/></g><text x="433" y="645" font-size="6.2" font-weight="700" fill="#fff" text-anchor="middle">M</text>
<path d="M704.8 644A12.2 12.2 0 1 1 729.2 644C729.2 652 721 658 717 667.5C713 658 704.8 652 704.8 644Z" fill="#16a3b5" stroke="#fff" stroke-width="1"/><g fill="#fff"><path d="M710.5 641.8L717 637.4L723.5 641.8V643H710.5Z"/><rect x="710.5" y="648.4" width="13" height="1.6"/><rect x="711.4" y="643.4" width="1.5" height="4.6"/><rect x="721.1" y="643.4" width="1.5" height="4.6"/></g><text x="717" y="648" font-size="6.2" font-weight="700" fill="#fff" text-anchor="middle">M</text>
<path d="M527.8 693A12.2 12.2 0 1 1 552.2 693C552.2 701 544 707 540 716.5C536 707 527.8 701 527.8 693Z" fill="#16a3b5" stroke="#fff" stroke-width="1"/><g fill="#fff"><path d="M533.5 690.8L540 686.4L546.5 690.8V692H533.5Z"/><rect x="533.5" y="697.4" width="13" height="1.6"/><rect x="534.4" y="692.4" width="1.5" height="4.6"/><rect x="544.1" y="692.4" width="1.5" height="4.6"/></g><text x="540" y="697" font-size="6.2" font-weight="700" fill="#fff" text-anchor="middle">M</text>
<path d="M882.8 683A12.2 12.2 0 1 1 907.2 683C907.2 691 899 697 895 706.5C891 697 882.8 691 882.8 683Z" fill="#16a3b5" stroke="#fff" stroke-width="1"/><g fill="#fff"><path d="M888.5 680.8L895 676.4L901.5 680.8V682H888.5Z"/><rect x="888.5" y="687.4" width="13" height="1.6"/><rect x="889.4" y="682.4" width="1.5" height="4.6"/><rect x="899.1" y="682.4" width="1.5" height="4.6"/></g><text x="895" y="687" font-size="6.2" font-weight="700" fill="#fff" text-anchor="middle">M</text>
<path d="M930.8 724A12.2 12.2 0 1 1 955.2 724C955.2 732 947 738 943 747.5C939 738 930.8 732 930.8 724Z" fill="#16a3b5" stroke="#fff" stroke-width="1"/><g fill="#fff"><path d="M937.5 720.8H940.4L941.6 719.2H946L947.2 720.8H949.5V729H937.5Z"/><path d="M935.4 717.6h1.2v1.2h1.2v1.2h-1.2v1.2h-1.2v-1.2h-1.2v-1.2h1.2z"/></g><circle cx="943.8" cy="724.8" r="2.5" fill="#16a3b5"/><circle cx="943.8" cy="724.8" r="1.3" fill="#fff"/>
<path d="M766.8 799A12.2 12.2 0 1 1 791.2 799C791.2 807 783 813 779 822.5C775 813 766.8 807 766.8 799Z" fill="#16a3b5" stroke="#fff" stroke-width="1"/><g fill="#fff"><path d="M778 791.6H780L781.2 801.6H776.8Z"/><rect x="775.4" y="802" width="7.2" height="2"/><rect x="774" y="804.2" width="10" height="1.6"/></g>
<path d="M591.8 846A12.2 12.2 0 1 1 616.2 846C616.2 854 608 860 604 869.5C600 860 591.8 854 591.8 846Z" fill="#16a3b5" stroke="#fff" stroke-width="1"/><g fill="#fff"><path d="M598.5 842.8H601.4L602.6 841.2H607L608.2 842.8H610.5V851H598.5Z"/><path d="M596.4 839.6h1.2v1.2h1.2v1.2h-1.2v1.2h-1.2v-1.2h-1.2v-1.2h1.2z"/></g><circle cx="604.8" cy="846.8" r="2.5" fill="#16a3b5"/><circle cx="604.8" cy="846.8" r="1.3" fill="#fff"/>
<path d="M931.8 506A12.2 12.2 0 1 1 956.2 506C956.2 514 948 520 944 529.5C940 520 931.8 514 931.8 506Z" fill="#e8453c" stroke="#fff" stroke-width="1"/><text x="944" y="511.4" font-size="15" font-weight="700" fill="#fff" text-anchor="middle">H</text>
<path d="M1036.8 534A12.2 12.2 0 1 1 1061.2 534C1061.2 542 1053 548 1049 557.5C1045 548 1036.8 542 1036.8 534Z" fill="#34a853" stroke="#fff" stroke-width="1"/><g fill="#fff"><path d="M1049 526.6L1053.4 532.6H1051.4L1054.6 537.2H1050V540.4H1048V537.2H1043.4L1046.6 532.6H1044.6Z"/></g>
<path d="M994.8 881A12.2 12.2 0 1 1 1019.2 881C1019.2 889 1011 895 1007 904.5C1003 895 994.8 889 994.8 881Z" fill="#34a853" stroke="#fff" stroke-width="1"/><circle cx="1007" cy="881" r="3.8" fill="#fff"/>
<path d="M516 509L563.4 505.3L591.3 510.5L606 540.6L602 575" stroke="#2236d8" stroke-width="3" fill="none" stroke-linejoin="miter"/>
<path d="M568.5 507.5L575 517.8L581.8 515.6L579.5 511L568.5 507.5" stroke="#2236d8" stroke-width="2.6" fill="none" stroke-linejoin="miter"/>
<path d="M508 520.8L521.4 529.6L520.7 536L503 539" stroke="#2236d8" stroke-width="2.6" fill="none" stroke-linejoin="miter"/>
<path d="M427 529L441 534.8" stroke="#2236d8" stroke-width="2.6" fill="none" stroke-linejoin="miter"/>
<path d="M439.7 542.8L448.6 548L451.5 542.8L444 539L439.7 542.8" stroke="#2236d8" stroke-width="2.6" fill="none" stroke-linejoin="miter"/>
<path d="M458 559.8L495 596.6L511.8 581L522 573.8L562 595L595.7 609.8L603 599.5L609 602.5L620 601L645.6 614L668 577.6" stroke="#2236d8" stroke-width="3" fill="none" stroke-linejoin="miter"/>
<path d="M588.4 556.8L584.7 568.6L613.4 581L616.3 576L620 573L656 562L668 560" stroke="#2236d8" stroke-width="3" fill="none" stroke-linejoin="miter"/>
<path d="M668 560L700 565.5L780 590.7L844 613L819 688L848 702" stroke="#2236d8" stroke-width="3" fill="none" stroke-linejoin="miter"/>
<path d="M690 553L718.3 546L730.4 543.2L780 553.4L834 572L788 697L858 743" stroke="#2236d8" stroke-width="3" fill="none" stroke-linejoin="miter"/>
<path d="M880 685L888 693L885 721L875 718" stroke="#2236d8" stroke-width="3" fill="none" stroke-linejoin="miter"/>
<path d="M690 553L720 545L722 536.6" stroke="#a273ef" stroke-width="3" fill="none" stroke-linejoin="miter"/>
<path d="M727.6 530L729.5 539.4L780 553.4L834 572L891 585L910 601L926 642L936 710" stroke="#a273ef" stroke-width="3" fill="none" stroke-linejoin="miter"/>
<path d="M927 742L923 753L847 786L842 792L834 787" stroke="#a273ef" stroke-width="3" fill="none" stroke-linejoin="miter"/>
<path d="M846 786L872 721L859 720L867 729" stroke="#a273ef" stroke-width="3" fill="none" stroke-linejoin="miter"/>
<path d="M698 600L698 625" stroke="#a273ef" stroke-width="3" fill="none" stroke-linejoin="miter"/>
<path d="M711 640L722 643L742.5 654L737 680L749 686L760 690L842 731L852 716" stroke="#a273ef" stroke-width="3" fill="none" stroke-linejoin="miter"/>
<path d="M561.5 480.8A13.5 13.5 0 1 1 588.5 480.8C588.5 488.8 580 494.8 575 503.5C570 494.8 561.5 488.8 561.5 480.8Z" fill="#2a3fe3" stroke="#0b0b33" stroke-width="1.2"/>
<path d="M555.0 485.8A13.5 13.5 0 1 1 582.0 485.8C582.0 493.8 573.5 499.8 568.5 508.5C563.5 499.8 555.0 493.8 555.0 485.8Z" fill="#2a3fe3" stroke="#0b0b33" stroke-width="1.2"/><text x="568.5" y="495.2" font-size="17.5" font-weight="700" fill="#fff" text-anchor="middle" letter-spacing="-.6">18</text>
<path d="M491.0 499.8A13.5 13.5 0 1 1 518.0 499.8C518.0 507.8 509.5 513.8 504.5 522.5C499.5 513.8 491.0 507.8 491.0 499.8Z" fill="#2a3fe3" stroke="#0b0b33" stroke-width="1.2"/><text x="504.5" y="509.2" font-size="17.5" font-weight="700" fill="#fff" text-anchor="middle" letter-spacing="-.6">15</text>
<path d="M435.1 510.8A13.5 13.5 0 1 1 462.1 510.8C462.1 518.8 453.6 524.8 448.6 533.5C443.6 524.8 435.1 518.8 435.1 510.8Z" fill="#2a3fe3" stroke="#0b0b33" stroke-width="1.2"/><text x="448.6" y="520.2" font-size="17.5" font-weight="700" fill="#fff" text-anchor="middle" letter-spacing="-.6">8</text>
<path d="M457.1 535.8A13.5 13.5 0 1 1 484.1 535.8C484.1 543.8 475.6 549.8 470.6 558.5C465.6 549.8 457.1 543.8 457.1 535.8Z" fill="#2a3fe3" stroke="#0b0b33" stroke-width="1.2"/>
<path d="M466.0 537.4A13.5 13.5 0 1 1 493.0 537.4C493.0 545.4 484.5 551.4 479.5 560.1C474.5 551.4 466.0 545.4 466.0 537.4Z" fill="#2a3fe3" stroke="#0b0b33" stroke-width="1.2"/>
<path d="M448.3 525.8A13.5 13.5 0 1 1 475.3 525.8C475.3 533.8 466.8 539.8 461.8 548.5C456.8 539.8 448.3 533.8 448.3 525.8Z" fill="#2a3fe3" stroke="#0b0b33" stroke-width="1.2"/><text x="461.8" y="535.2" font-size="17.5" font-weight="700" fill="#fff" text-anchor="middle" letter-spacing="-.6">12</text>
<path d="M425.5 517.6A13.5 13.5 0 1 1 452.5 517.6C452.5 525.6 444 531.6 439 540.3C434 531.6 425.5 525.6 425.5 517.6Z" fill="#2a3fe3" stroke="#0b0b33" stroke-width="1.2"/><text x="439" y="527.0" font-size="17.5" font-weight="700" fill="#fff" text-anchor="middle" letter-spacing="-.6">14</text>
<path d="M477.5 532.8A13.5 13.5 0 1 1 504.5 532.8C504.5 540.8 496 546.8 491 555.5C486 546.8 477.5 540.8 477.5 532.8Z" fill="#2a3fe3" stroke="#0b0b33" stroke-width="1.2"/>
<path d="M473.3 523.5A13.5 13.5 0 1 1 500.3 523.5C500.3 531.5 491.8 537.5 486.8 546.2C481.8 537.5 473.3 531.5 473.3 523.5Z" fill="#2a3fe3" stroke="#0b0b33" stroke-width="1.2"/><text x="486.8" y="532.9" font-size="17.5" font-weight="700" fill="#fff" text-anchor="middle" letter-spacing="-.6">16</text>
<path d="M495.5 548.8A13.5 13.5 0 1 1 522.5 548.8C522.5 556.8 514 562.8 509 571.5C504 562.8 495.5 556.8 495.5 548.8Z" fill="#2a3fe3" stroke="#0b0b33" stroke-width="1.2"/>
<path d="M498.3 556.6A13.5 13.5 0 1 1 525.3 556.6C525.3 564.6 516.8 570.6 511.8 579.3C506.8 570.6 498.3 564.6 498.3 556.6Z" fill="#2a3fe3" stroke="#0b0b33" stroke-width="1.2"/><text x="511.8" y="566.0" font-size="17.5" font-weight="700" fill="#fff" text-anchor="middle" letter-spacing="-.6">5</text>
<path d="M588.9 553.6A13.5 13.5 0 1 1 615.9 553.6C615.9 561.6 607.4 567.6 602.4 576.3C597.4 567.6 588.9 561.6 588.9 553.6Z" fill="#2a3fe3" stroke="#0b0b33" stroke-width="1.2"/><text x="602.4" y="563.0" font-size="17.5" font-weight="700" fill="#fff" text-anchor="middle" letter-spacing="-.6">19</text>
<path d="M560.9 578.6A13.5 13.5 0 1 1 587.9 578.6C587.9 586.6 579.4 592.6 574.4 601.3C569.4 592.6 560.9 586.6 560.9 578.6Z" fill="#2a3fe3" stroke="#0b0b33" stroke-width="1.2"/><text x="574.4" y="588.0" font-size="17.5" font-weight="700" fill="#fff" text-anchor="middle" letter-spacing="-.6">2</text>
<path d="M652.5 549.8A13.5 13.5 0 1 1 679.5 549.8C679.5 557.8 671 563.8 666 572.5C661 563.8 652.5 557.8 652.5 549.8Z" fill="#2a3fe3" stroke="#0b0b33" stroke-width="1.2"/>
<path d="M656.5 553.8A13.5 13.5 0 1 1 683.5 553.8C683.5 561.8 675 567.8 670 576.5C665 567.8 656.5 561.8 656.5 553.8Z" fill="#2a3fe3" stroke="#0b0b33" stroke-width="1.2"/>
<path d="M707.0 514.8A13.5 13.5 0 1 1 734.0 514.8C734.0 522.8 725.5 528.8 720.5 537.5C715.5 528.8 707.0 522.8 707.0 514.8Z" fill="#a673f0" stroke="#0b0b33" stroke-width="1.2"/><text x="720.5" y="524.2" font-size="17.5" font-weight="700" fill="#efe6ff" text-anchor="middle" letter-spacing="-.6">9</text>
<path d="M661.0 535.3A13.5 13.5 0 1 1 688.0 535.3C688.0 543.3 679.5 549.3 674.5 558.0C669.5 549.3 661.0 543.3 661.0 535.3Z" fill="#a673f0" stroke="#0b0b33" stroke-width="1.2"/>
<path d="M670.3 540.8A13.5 13.5 0 1 1 697.3 540.8C697.3 548.8 688.8 554.8 683.8 563.5C678.8 554.8 670.3 548.8 670.3 540.8Z" fill="#a673f0" stroke="#0b0b33" stroke-width="1.2"/><text x="683.8" y="550.2" font-size="17.5" font-weight="700" fill="#efe6ff" text-anchor="middle" letter-spacing="-.6">13</text>
<path d="M672.2 562.3A13.5 13.5 0 1 1 699.2 562.3C699.2 570.3 690.7 576.3 685.7 585.0C680.7 576.3 672.2 570.3 672.2 562.3Z" fill="#a673f0" stroke="#0b0b33" stroke-width="1.2"/><text x="685.7" y="571.7" font-size="17.5" font-weight="700" fill="#efe6ff" text-anchor="middle" letter-spacing="-.6">14</text>
<circle cx="698.7" cy="593.5" r="11.2" fill="#fff" stroke="#b086f3" stroke-width="4"/><path d="M692.4 597V590.6M692.4 595.4H705V597M693.8 595V592.4H698V595M698.8 595V592H702.8Q705 592 705 595" stroke="#a673f0" stroke-width="1.4" fill="none"/>
<path d="M682.5 615.4A13.5 13.5 0 1 1 709.5 615.4C709.5 623.4 701 629.4 696 638.1C691 629.4 682.5 623.4 682.5 615.4Z" fill="#a673f0" stroke="#0b0b33" stroke-width="1.2"/><text x="696" y="624.8" font-size="17.5" font-weight="700" fill="#efe6ff" text-anchor="middle" letter-spacing="-.6">1</text>
<path d="M695.9 627.6A13.5 13.5 0 1 1 722.9 627.6C722.9 635.6 714.4 641.6 709.4 650.3C704.4 641.6 695.9 635.6 695.9 627.6Z" fill="#a673f0" stroke="#0b0b33" stroke-width="1.2"/><text x="709.4" y="637.0" font-size="17.5" font-weight="700" fill="#efe6ff" text-anchor="middle" letter-spacing="-.6">2</text>
<path d="M834.5 685.8A13.5 13.5 0 1 1 861.5 685.8C861.5 693.8 853 699.8 848 708.5C843 699.8 834.5 693.8 834.5 685.8Z" fill="#a673f0" stroke="#0b0b33" stroke-width="1.2"/>
<path d="M843.5 688.8A13.5 13.5 0 1 1 870.5 688.8C870.5 696.8 862 702.8 857 711.5C852 702.8 843.5 696.8 843.5 688.8Z" fill="#a673f0" stroke="#0b0b33" stroke-width="1.2"/>
<path d="M862.5 696.8A13.5 13.5 0 1 1 889.5 696.8C889.5 704.8 881 710.8 876 719.5C871 710.8 862.5 704.8 862.5 696.8Z" fill="#a673f0" stroke="#0b0b33" stroke-width="1.2"/>
<path d="M852.5 694.8A13.5 13.5 0 1 1 879.5 694.8C879.5 702.8 871 708.8 866 717.5C861 708.8 852.5 702.8 852.5 694.8Z" fill="#a673f0" stroke="#0b0b33" stroke-width="1.2"/><text x="866" y="704.2" font-size="17.5" font-weight="700" fill="#efe6ff" text-anchor="middle" letter-spacing="-.6">6</text>
<path d="M912.5 719.2A13.5 13.5 0 1 1 939.5 719.2C939.5 727.2 931 733.2 926 741.9C921 733.2 912.5 727.2 912.5 719.2Z" fill="#a673f0" stroke="#0b0b33" stroke-width="1.2"/><text x="926" y="728.6" font-size="17.5" font-weight="700" fill="#efe6ff" text-anchor="middle" letter-spacing="-.6">8</text>
<path d="M819.5 763.8A13.5 13.5 0 1 1 846.5 763.8C846.5 771.8 838 777.8 833 786.5C828 777.8 819.5 771.8 819.5 763.8Z" fill="#a673f0" stroke="#0b0b33" stroke-width="1.2"/><text x="833" y="773.2" font-size="17.5" font-weight="700" fill="#efe6ff" text-anchor="middle" letter-spacing="-.6">7</text>
<rect x="997.6" y="736.4" width="48.6" height="98.4" rx="2" fill="#fff" filter="url(#zs)"/><defs><filter id="zs" x="-20%" y="-10%" width="140%" height="125%"><feDropShadow dx="0" dy="1" stdDeviation="1.6" flood-opacity=".28"/></filter></defs>
<path d="M1005 785.6H1038" stroke="#e6e6e6" stroke-width="1"/>
<path d="M1010.9 760.2H1032.9M1021.9 749.2V771.2" stroke="#666" stroke-width="4.2"/><path d="M1010.9 810.4H1032.9" stroke="#666" stroke-width="4.2"/>
<rect x="1019.6" y="374" width="38.8" height="60.4" rx="2" fill="#1565a9"/><path d="M1034.6 392.6V416.6L1046.6 404.6Z" stroke="#fff" stroke-width="2.2" fill="none" stroke-linejoin="miter"/></svg>
<div class="b" style="left:375.0px;top:250.0px;width:1476.0px;height:124.0px;background:#f8f8f9;"></div>
<div class="b" style="left:1059.0px;top:374.0px;width:792.0px;height:545.0px;background:#fff;"></div>
<div class="b" style="left:95.0px;top:178.0px;width:280.0px;height:741.0px;background:#fff;border-right:2px solid #e2e2e2;"></div>
<div class="b" style="left:375.5px;top:178.0px;width:1476.0px;height:72.0px;background:#fff;border-bottom:2px solid #e9e9e9;"></div>
<div class="b" style="left:95.0px;top:100.0px;width:1756.0px;height:78.0px;background:#fff;box-shadow:0 1px 4px rgba(0,0,0,.32);"></div>
<svg class="b" style="left:122.5px;top:122.3px;" width="31" height="31" viewBox="0 0 31 31" fill="none"><defs><linearGradient id="lg1" x1="0" y1="0" x2="1" y2="0"><stop offset="0" stop-color="#1a22d8"/><stop offset=".55" stop-color="#1b44d8"/><stop offset=".85" stop-color="#5a3ce8"/><stop offset="1" stop-color="#6a40ee"/></linearGradient>
<linearGradient id="lg2" x1="0" y1="1" x2="0.6" y2="0"><stop offset="0" stop-color="#3a96f5" stop-opacity="0"/><stop offset=".4" stop-color="#3a96f5" stop-opacity="1"/><stop offset=".75" stop-color="#2f8cf0" stop-opacity=".9"/><stop offset="1" stop-color="#2f8cf0" stop-opacity="0"/></linearGradient>
<linearGradient id="lg3" x1="0" y1="0" x2="1" y2="0"><stop offset="0" stop-color="#3f95f7"/><stop offset="1" stop-color="#3f7ff2" stop-opacity=".3"/></linearGradient></defs>
<path d="M14.5 2.8A11.7 11.7 0 1 0 14.5 26.2H26.2V14.5A11.7 11.7 0 0 0 14.5 2.8Z" stroke="url(#lg1)" stroke-width="5.2" fill="none" stroke-linejoin="miter"/>
<path d="M3.4 18.4A11.7 11.7 0 0 1 12.4 3" stroke="url(#lg2)" stroke-width="5.2" fill="none"/>
<rect x="16.6" y="23.6" width="10" height="5.2" fill="url(#lg3)"/></svg>
<span class="t" style="left:159.3px;top:123.9px;font-size:32px;color:#1d1d1d;letter-spacing:-0.30px;font-weight:700;transform:scaleX(0.930);transform-origin:0 50%;">Ants</span>
<span class="t" style="left:227.3px;top:123.9px;font-size:32px;color:#2b2b2b;letter-spacing:-0.30px;transform:scaleX(0.951);transform-origin:0 50%;">Route</span>
<span class="t" style="left:358.5px;top:130.9px;font-size:15.5px;color:#222;letter-spacing:0.92px;">Agency</span>
<div class="b" style="left:425.0px;top:118.3px;width:160.8px;height:40.0px;border:1.5px solid #d3d3d3;border-radius:5px;background:#fff;"></div>
<span class="t" style="left:444.5px;top:130.9px;font-size:15.5px;color:#333;letter-spacing:0.52px;">Nancy</span>
<svg class="b" style="left:553.0px;top:135.5px;" width="14" height="8" viewBox="0 0 14 8" fill="none"><path d="M0.3 0.5H13.7L7 7.3Z" fill="#555"/></svg>
<svg class="b" style="left:737.5px;top:127.0px;" width="21" height="22" viewBox="0 0 21 22" fill="none"><rect x="1.5" y="2.6" width="18" height="18.2" stroke="#2c2c2c" stroke-width="1.9"/>
<path d="M1.5 3.4H19.5" stroke="#2c2c2c" stroke-width="2.6"/><path d="M1.5 7.4H19.5" stroke="#2c2c2c" stroke-width="1.3"/>
<path d="M5.6 0.6V4M15.4 0.6V4" stroke="#2c2c2c" stroke-width="2"/>
<g fill="#2c2c2c"><rect x="8.2" y="9.6" width="1.9" height="1.9"/><rect x="11.6" y="9.6" width="1.9" height="1.9"/><rect x="15" y="9.6" width="1.9" height="1.9"/><rect x="4.8" y="13.1" width="1.9" height="1.9"/><rect x="8.2" y="13.1" width="1.9" height="1.9"/><rect x="11.6" y="13.1" width="1.9" height="1.9"/><rect x="15" y="13.1" width="1.9" height="1.9"/><rect x="4.8" y="16.6" width="1.9" height="1.9"/><rect x="8.2" y="16.6" width="1.9" height="1.9"/><rect x="11.6" y="16.6" width="1.9" height="1.9"/></g></svg>
<span class="t" style="left:763.3px;top:130.9px;font-size:15.5px;color:#2c2c2c;letter-spacing:0.23px;">Plan</span>
<svg class="b" style="left:824.5px;top:128.0px;" width="23" height="20" viewBox="0 0 23 20" fill="none"><path d="M3.2 17.6A10 10 0 1 1 19.8 17.6Q19.3 18.6 18.2 18.6H4.8Q3.7 18.6 3.2 17.6Z" stroke="#2c2c2c" stroke-width="1.9" stroke-linejoin="round"/>
<path d="M10.6 12.8L16.8 9.2" stroke="#2c2c2c" stroke-width="1.9" stroke-linecap="round"/><circle cx="10.3" cy="13" r="1.9" fill="#2c2c2c"/>
<g fill="#2c2c2c"><circle cx="5" cy="12.3" r=".9"/><circle cx="6.4" cy="8.2" r=".9"/><circle cx="9.8" cy="5.6" r=".9"/><circle cx="13.6" cy="5.4" r=".9"/><circle cx="18" cy="12.3" r=".9"/><circle cx="5.6" cy="15.6" r=".8"/><circle cx="17.4" cy="15.6" r=".8"/></g></svg>
<span class="t" style="left:850.8px;top:130.9px;font-size:15.5px;color:#2c2c2c;letter-spacing:0.44px;">Organize</span>
<div class="b" style="left:933.7px;top:119.3px;width:105.6px;height:38.0px;background:#eaf4fd;border-radius:6px;"></div>
<svg class="b" style="left:946.3px;top:128.0px;" width="23" height="21" viewBox="0 0 23 21" fill="none"><path d="M1 3.4H17.2L21.2 7.2L17.2 11H1Z" stroke="#3b97d8" stroke-width="1.8" stroke-linejoin="round"/><path d="M10.3 0.4V3.4M10.3 11V20.6" stroke="#3b97d8" stroke-width="1.8"/></svg>
<span class="t" style="left:972.7px;top:130.9px;font-size:15.5px;color:#3b97d8;letter-spacing:0.82px;">Monitor</span>
<svg class="b" style="left:1058.0px;top:127.3px;" width="24" height="23" viewBox="0 0 24 23" fill="none"><path d="M1.2 21V6.2L5.2 4.4L10.2 6.4L15.8 3.6L22 0.8V21Z" stroke="#2c2c2c" stroke-width="1.9" stroke-linejoin="miter"/>
<path d="M1.2 13.2L5.4 10.2L10.2 13L16 9.4L22 10.6" stroke="#2c2c2c" stroke-width="1.8"/></svg>
<span class="t" style="left:1084.8px;top:130.9px;font-size:15.5px;color:#2c2c2c;letter-spacing:0.28px;">Analyze</span>
<svg class="b" style="left:1300.5px;top:128.0px;" width="26" height="21" viewBox="0 0 26 21" fill="none"><g stroke="#2c2c2c" stroke-width="1.6" fill="none"><circle cx="8.6" cy="3.6" r="2.6"/><circle cx="17.4" cy="3.6" r="2.6"/>
<circle cx="4.6" cy="9.8" r="2.5"/><circle cx="13" cy="10" r="2.7"/><circle cx="21.4" cy="9.8" r="2.5"/>
<path d="M0.8 17.4C1 14.4 2.6 13 4.6 13S8 14 8.4 15.6M25.2 17.4C25 14.4 23.4 13 21.4 13S18 14 17.6 15.6M8.2 19.6C8.4 15.8 10.4 13.6 13 13.6S17.6 15.8 17.8 19.6"/></g></svg>
<span class="t" style="left:1328.7px;top:130.9px;font-size:15.5px;color:#2c2c2c;letter-spacing:0.46px;">Customers</span>
<svg class="b" style="left:1438.3px;top:128.0px;" width="24" height="26" viewBox="0 0 24 26" fill="none"><g stroke="#2c2c2c" stroke-width="1.8" fill="none"><circle cx="9.6" cy="6" r="5"/><path d="M1 19.4C1.4 14.6 4.6 11.6 9.6 11.6C11.2 11.6 12.4 11.9 13.6 12.5"/></g>
<g transform="translate(17.6 19)"><circle r="3.2" stroke="#2c2c2c" stroke-width="1.7" fill="none"/><g stroke="#2c2c2c" stroke-width="1.9" stroke-linecap="butt"><path d="M0 -3.4V-5.6M0 3.4V5.6M-3.4 0H-5.6M3.4 0H5.6M2.4 2.4L4 4M-2.4 2.4L-4 4M2.4 -2.4L4 -4M-2.4 -2.4L-4 -4"/></g></g></svg>
<span class="t" style="left:1463.2px;top:130.9px;font-size:15.5px;color:#2c2c2c;letter-spacing:0.06px;">Resources</span>
<svg class="b" style="left:1565.5px;top:125.8px;" width="25" height="25" viewBox="0 0 25 25" fill="none"><path d="M10.45 1.08L14.55 1.08L15.04 4.39L18.25 6.24L21.36 5.01L23.41 8.57L20.80 10.65L20.80 14.35L23.41 16.43L21.36 19.99L18.25 18.76L15.04 20.61L14.55 23.92L10.45 23.92L9.96 20.61L6.75 18.76L3.64 19.99L1.59 16.43L4.20 14.35L4.20 10.65L1.59 8.57L3.64 5.01L6.75 6.24L9.96 4.39Z" stroke="#2c2c2c" stroke-width="2" stroke-linejoin="round" fill="none"/><circle cx="12.5" cy="12.5" r="3.9" stroke="#2c2c2c" stroke-width="2" fill="none"/></svg>
<span class="t" style="left:1593.6px;top:130.9px;font-size:15.5px;color:#2c2c2c;letter-spacing:0.50px;">Settings</span>
<svg class="b" style="left:1684.0px;top:127.0px;" width="26" height="26" viewBox="0 0 26 26" fill="none"><circle cx="15" cy="10" r="8.4" stroke="#2c2c2c" stroke-width="1.9"/><path d="M9.2 16L1 24.4" stroke="#2c2c2c" stroke-width="2"/></svg>
<svg class="b" style="left:1739.7px;top:128.0px;" width="21" height="24" viewBox="0 0 21 24" fill="none"><path d="M2 19.4H18.6C16.8 17.8 16.4 16 16.4 13V9.6C16.4 5.6 13.8 3 10.3 3S4.2 5.6 4.2 9.6V13C4.2 16 3.8 17.8 2 19.4Z" stroke="#2c2c2c" stroke-width="1.9" stroke-linejoin="round"/>
<path d="M10.3 0.4V3" stroke="#2c2c2c" stroke-width="2"/><path d="M8.2 20.6A2.2 2.2 0 0 0 12.4 20.6" stroke="#2c2c2c" stroke-width="1.8"/></svg>
<div class="b" style="left:1750.7px;top:111.5px;width:26.6px;height:26.6px;border-radius:50%;background:#1063a8;"></div>
<span class="t" style="left:1755.0px;top:117.2px;font-size:15.4px;color:#fff;letter-spacing:0.87px;font-weight:700;">98</span>
<div class="b" style="left:1783.3px;top:114.4px;width:48.0px;height:48.0px;border-radius:50%;background:#2a97ef;box-shadow:0 3px 7px rgba(0,0,0,.3);"></div>
<span class="t" style="left:1794.3px;top:130.3px;font-size:16px;color:#fff;letter-spacing:1.32px;font-weight:700;">MH</span>
<div class="b" style="left:357.0px;top:197.4px;width:33.6px;height:33.6px;border-radius:50%;background:#fff;box-shadow:0 3px 9px rgba(0,0,0,.22),0 0 2px rgba(0,0,0,.12);"></div>
<svg class="b" style="left:367.5px;top:206.5px;" width="10" height="16" viewBox="0 0 10 16" fill="none"><path d="M9 0.8L1.6 7.8L9 15" stroke="#7a7a7a" stroke-width="1.5"/></svg>
<span class="t" style="left:412.6px;top:204.2px;font-size:21.5px;color:#d5783f;letter-spacing:1.12px;">Real time monitoring</span>
<div class="b" style="left:1775.6px;top:193.8px;width:39.0px;height:39.0px;border-radius:50%;background:#0f63a8;box-shadow:0 1px 3px rgba(0,0,0,.25);"></div>
<svg class="b" style="left:1786.1px;top:204.3px;" width="18" height="18" viewBox="0 0 18 18" fill="none"><path d="M9 0.5V17.5M0.5 9H17.5" stroke="#fff" stroke-width="1.7"/></svg>
<div class="b" style="left:107.3px;top:287.2px;width:254.3px;height:38.4px;background:#edf6fd;border-radius:5px;"></div>
<svg class="b" style="left:117.0px;top:295.2px;" width="22.4" height="21.4" viewBox="0 0 23 22" fill="none"><g stroke="#3b97d8" stroke-width="2" fill="none" stroke-linejoin="round"><path d="M10.6 5.2L7.4 4L1 6.4V21L7.4 18.6L14.4 21L21.6 18.4V14.6"/><path d="M7.4 4V18.6M14.4 17V21"/>
<path d="M16.6 0.9A4.9 4.9 0 0 0 11.7 5.8C11.7 9.2 16.6 15.2 16.6 15.2S21.5 9.2 21.5 5.8A4.9 4.9 0 0 0 16.6 0.9Z"/></g><circle cx="16.6" cy="5.6" r="1.5" fill="#3b97d8"/></svg>
<span class="t" style="left:149.2px;top:298.5px;font-size:15.5px;color:#3b97d8;letter-spacing:0.63px;">Map</span>
<svg class="b" style="left:116.5px;top:347.4px;" width="23" height="21" viewBox="0 0 23 21" fill="none"><g stroke="#1c1c1c" stroke-width="2.3" fill="none"><path d="M10.2 3.4H22M10.2 10.6H22M10.2 17.8H22"/><path d="M1 3.4L3 5.4L6.6 1.6M1 10.6L3 12.6L6.6 8.8M1 17.8L3 19.8L6.6 16" stroke-width="2.2"/></g></svg>
<span class="t" style="left:149.2px;top:349.9px;font-size:15.5px;color:#222;letter-spacing:0.38px;">List of work orders</span>
<div class="b" style="left:394.0px;top:269.2px;width:350.0px;height:86.0px;background:#fff;border-radius:6px;box-shadow:0 0 6px rgba(0,0,0,.05);"></div>
<div class="b" style="left:403.7px;top:287.5px;width:49.0px;height:49.0px;border-radius:50%;background:#fef6e6;"></div>
<svg class="b" style="left:414.2px;top:298.0px;" width="28" height="28" viewBox="-14 -14 28 28" fill="none"><g stroke="#f3b84c" stroke-width="1.5" fill="none" stroke-linejoin="miter"><path d="M-7.6 -7.2H7.6L11.2 7.2H-11.2Z"/><path d="M0 -6V-3.6M0 -1.6V1.4M0 3.4V6.4" stroke-width="1.3"/></g></svg>
<span class="t" style="left:463.3px;top:287.0px;font-size:21.5px;color:#1b1b1b;font-weight:700;transform:scaleX(1.0);transform-origin:0 0;">1</span>
<span class="t" style="left:463.5px;top:317.0px;font-size:15.3px;color:#222;letter-spacing:0.65px;">Not started routes</span>
<div class="b" style="left:463.5px;top:337.2px;width:274.5px;height:4.6px;background:#d1d1d1;border-radius:2.3px;overflow:hidden;"><div class="b" style="left:0.0px;top:0.0px;width:91.4px;height:4.6px;background:#f5b942;"></div></div>
<div class="b" style="left:757.0px;top:269.2px;width:350.0px;height:86.0px;background:#fff;border-radius:6px;box-shadow:0 0 6px rgba(0,0,0,.05);"></div>
<div class="b" style="left:766.7px;top:287.5px;width:49.0px;height:49.0px;border-radius:50%;background:#ebf4fd;"></div>
<svg class="b" style="left:777.2px;top:298.0px;" width="28" height="28" viewBox="-14 -14 28 28" fill="none"><g fill="#4a8fcf"><circle cx="0.00" cy="-8.10" r="2.4"/><circle cx="-5.73" cy="-5.73" r="2.1"/><circle cx="-8.10" cy="-0.00" r="1.9"/><circle cx="-5.73" cy="5.73" r="1.6"/><circle cx="-0.00" cy="8.10" r="1.4"/><circle cx="5.73" cy="5.73" r="1.2"/><circle cx="8.10" cy="0.00" r="1.0"/><circle cx="5.73" cy="-5.73" r="0.8"/></g></svg>
<span class="t" style="left:826.3px;top:287.0px;font-size:21.5px;color:#1b1b1b;font-weight:700;transform:scaleX(1.22);transform-origin:0 0;">2</span>
<span class="t" style="left:826.5px;top:317.0px;font-size:15.3px;color:#222;letter-spacing:0.84px;">On-going routes</span>
<div class="b" style="left:826.5px;top:337.2px;width:274.5px;height:4.6px;background:#d1d1d1;border-radius:2.3px;overflow:hidden;"><div class="b" style="left:0.0px;top:0.0px;width:183.1px;height:4.6px;background:#3f8ddb;"></div></div>
<div class="b" style="left:1120.0px;top:269.2px;width:350.0px;height:86.0px;background:#fff;border-radius:6px;box-shadow:0 0 6px rgba(0,0,0,.05);"></div>
<div class="b" style="left:1129.7px;top:287.5px;width:49.0px;height:49.0px;border-radius:50%;background:#eaf7f3;"></div>
<svg class="b" style="left:1140.2px;top:298.0px;" width="28" height="28" viewBox="-14 -14 28 28" fill="none"><g stroke="#7cbfa5" stroke-width="1.5" fill="none" stroke-linecap="butt" stroke-linejoin="miter"><path d="M9.3 -1.6A9.4 9.4 0 1 1 5.6 -7.6"/><path d="M-4.2 -0.8L0 3.4L9 -5.8"/></g></svg>
<span class="t" style="left:1189.3px;top:287.0px;font-size:21.5px;color:#1b1b1b;font-weight:700;transform:scaleX(1.22);transform-origin:0 0;">0</span>
<span class="t" style="left:1189.5px;top:317.0px;font-size:15.3px;color:#222;letter-spacing:0.64px;">Ended routes</span>
<div class="b" style="left:1189.5px;top:337.2px;width:274.5px;height:4.6px;background:#d1d1d1;border-radius:2.3px;overflow:hidden;"></div>
<div class="b" style="left:1483.0px;top:269.2px;width:350.0px;height:86.0px;background:#fff;border-radius:6px;box-shadow:0 0 6px rgba(0,0,0,.05);"></div>
<div class="b" style="left:1492.7px;top:287.5px;width:49.0px;height:49.0px;border-radius:50%;background:#eeedfc;"></div>
<svg class="b" style="left:1503.2px;top:298.0px;" width="28" height="28" viewBox="-14 -14 28 28" fill="none"><g stroke="#6e66c9" stroke-width="1.6" fill="none"><circle cx="0" cy="-3.2" r="4.9"/><path d="M-7.4 9A7.4 7.6 0 0 1 7.4 9"/></g></svg>
<span class="t" style="left:1552.3px;top:287.0px;font-size:21.5px;color:#1b1b1b;font-weight:700;transform:scaleX(1.22);transform-origin:0 0;">0</span>
<span class="t" style="left:1552.5px;top:317.0px;font-size:15.3px;color:#222;letter-spacing:0.53px;">Field workers unassigned to a route</span>
<div class="b" style="left:1552.5px;top:337.2px;width:274.5px;height:4.6px;background:#d1d1d1;border-radius:2.3px;overflow:hidden;"></div>
<div class="b" style="left:1072.7px;top:383.6px;width:229.7px;height:31.6px;background:#efefef;border-radius:16px;"></div>
<svg class="b" style="left:1099.5px;top:394.2px;" width="10" height="11" viewBox="0 0 10 11" fill="none"><path d="M0.7 0.7H9.3L6 5.2V10L4 8.6V5.2Z" stroke="#555" stroke-width="1.1" stroke-linejoin="round"/></svg>
<span class="t" style="left:1122.7px;top:391.8px;font-size:15.3px;color:#4a4a4a;letter-spacing:0.57px;">Show display options</span>
<div class="b" style="left:1069.8px;top:435.6px;width:770.8px;height:144.2px;border:1.3px solid #dedede;background:#fff;"><div class="b" style="left:0.0px;top:0.0px;width:768.4px;height:43.6px;background:#efefef;"></div></div>
<div class="b" style="left:1081.4px;top:446.6px;width:22.2px;height:22.2px;background:#2e93ea;border-radius:3px;"></div>
<svg class="b" style="left:1083.4px;top:449.2px;" width="18" height="17" viewBox="0 0 18 17" fill="none"><path d="M2.6 9L7.2 13.4L15.6 3" stroke="#fff" stroke-width="2.2" fill="none" stroke-linecap="round" stroke-linejoin="round"/></svg>
<svg class="b" style="left:1114.0px;top:442.7px;" width="30" height="30" viewBox="0 0 30 30" fill="none"><circle cx="15" cy="15" r="9.6" stroke="#1a1a1a" stroke-width="2.5"/><path d="M15 0.6V6M15 24V29.4M0.6 15H6M24 15H29.4" stroke="#1a1a1a" stroke-width="2.6"/></svg>
<div class="b" style="left:1153.3px;top:445.4px;width:24.6px;height:24.6px;border-radius:50%;background:#a874f1;border:1.3px solid #15153a;"></div>
<span class="t" style="left:1187.6px;top:450.4px;font-size:15.3px;color:#1f1f1f;letter-spacing:0.32px;">Julia Fernandez | AS-987-WX</span>
<div class="b" style="left:1507.2px;top:446.5px;width:98.8px;height:22.8px;background:#dde8f4;border-radius:3px;"></div>
<span class="t" style="left:1514.6px;top:451.9px;font-size:11.8px;color:#3b8fd8;letter-spacing:0.17px;font-weight:700;">IN PROGRESS</span>
<div class="b" style="left:1615.8px;top:448.0px;width:146.3px;height:19.8px;background:#b9bdc1;border-radius:3px;overflow:hidden;"><div class="b" style="left:0.0px;top:0.0px;width:31.4px;height:19.8px;background:repeating-linear-gradient(45deg,#41ad58 0 5.5px,#64bf72 5.5px 11px);"></div></div>
<span class="t" style="left:1663.8px;top:451.1px;font-size:13.8px;color:#fff;letter-spacing:-0.14px;">21.43 %</span>
<svg class="b" style="left:1791.5px;top:455.7px;" width="20" height="4" viewBox="0 0 20 4" fill="none"><g fill="#222"><circle cx="2.3" cy="2" r="1.35"/><circle cx="9.9" cy="2" r="1.35"/><circle cx="17.4" cy="2" r="1.35"/></g></svg>
<span class="t" style="left:1098.2px;top:489.1px;font-size:15px;color:#222;letter-spacing:0.13px;">Pallets: 3/12 (Units)</span>
<span class="t" style="left:1336.5px;top:489.1px;font-size:15px;color:#222;letter-spacing:0.74px;">Weight: 400/3000 (Kg)</span>
<div class="b" style="left:1071.0px;top:514.0px;width:768.4px;height:1.2px;background:#e6e6e6;"></div>
<svg class="b" style="left:1130.6px;top:538.2px;" width="18" height="20" viewBox="0 0 18 20" fill="none"><g stroke="#5a5a5a" stroke-width="1.5" fill="none"><path d="M0.9 0.6V19.4"/><path d="M0.9 1.4H9.3V12.2H0.9"/><path d="M9.3 3.2H16.6V13.6H9.3"/></g></svg>
<span class="t" style="left:1152.2px;top:531.5px;font-size:12.3px;color:#5c5c5c;letter-spacing:0.61px;text-decoration:line-through;">8:00 AM</span>
<span class="t" style="left:1152.2px;top:550.0px;font-size:12.3px;color:#5c5c5c;letter-spacing:0.20px;">10:44 AM</span>
<div class="b" style="left:1263.6px;top:529.3px;width:191.2px;height:36.0px;background:#ecf5fd;border-radius:4px;"></div>
<svg class="b" style="left:1326.2px;top:537.8px;" width="18" height="20" viewBox="0 0 18 20" fill="none"><path d="M0.9 0.4V19.4" stroke="#3d8fd6" stroke-width="1.6"/><g fill="#3d8fd6"><rect x="1.20" y="0.80" width="2.29" height="2.20"/><rect x="5.77" y="0.80" width="2.29" height="2.20"/><rect x="10.34" y="0.80" width="2.29" height="2.20"/><rect x="14.91" y="0.80" width="2.29" height="2.20"/><rect x="3.49" y="3.00" width="2.29" height="2.20"/><rect x="8.06" y="3.00" width="2.29" height="2.20"/><rect x="12.63" y="3.00" width="2.29" height="2.20"/><rect x="1.20" y="5.20" width="2.29" height="2.20"/><rect x="5.77" y="5.20" width="2.29" height="2.20"/><rect x="10.34" y="5.20" width="2.29" height="2.20"/><rect x="14.91" y="5.20" width="2.29" height="2.20"/><rect x="3.49" y="7.40" width="2.29" height="2.20"/><rect x="8.06" y="7.40" width="2.29" height="2.20"/><rect x="12.63" y="7.40" width="2.29" height="2.20"/><rect x="1.20" y="9.60" width="2.29" height="2.20"/><rect x="5.77" y="9.60" width="2.29" height="2.20"/><rect x="10.34" y="9.60" width="2.29" height="2.20"/><rect x="14.91" y="9.60" width="2.29" height="2.20"/></g><rect x="1.2" y="0.8" width="16" height="11" fill="#3d8fd6" opacity=".4"/></svg>
<span class="t" style="left:1347.4px;top:531.5px;font-size:12.3px;color:#3b8fd8;letter-spacing:-0.13px;text-decoration:line-through;">1:06 PM</span>
<span class="t" style="left:1347.4px;top:550.0px;font-size:12.3px;color:#3b8fd8;letter-spacing:0.30px;">2:48 PM</span>
<svg class="b" style="left:1511.0px;top:539.0px;" width="24" height="16" viewBox="0 0 24 16" fill="none"><g stroke="#5a5a5a" stroke-width="1.5" fill="none" stroke-linejoin="miter"><path d="M5.2 1H18.8L23 15H1Z"/><path d="M12 1V3.4M12 6V9.4M12 12V15"/></g></svg>
<span class="t" style="left:1540.3px;top:541.0px;font-size:12.3px;color:#5c5c5c;letter-spacing:0.09px;">10.33 km</span>
<svg class="b" style="left:1727.6px;top:536.6px;" width="15" height="21" viewBox="0 0 15 21" fill="none"><g stroke="#5a5a5a" stroke-width="1.5" fill="none"><path d="M7.5 0.9C3.7 0.9 0.9 3.8 0.9 7.4C0.9 12 7.5 19.8 7.5 19.8S14.1 12 14.1 7.4C14.1 3.8 11.3 0.9 7.5 0.9Z"/></g><circle cx="7.5" cy="7.6" r="1.5" fill="#5a5a5a"/></svg>
<span class="t" style="left:1752.4px;top:541.0px;font-size:12.3px;color:#5c5c5c;letter-spacing:-0.30px;transform:scaleX(0.882);transform-origin:0 50%;">14</span>
<div class="b" style="left:1069.8px;top:590.4px;width:770.8px;height:144.2px;border:1.3px solid #dedede;background:#fff;"><div class="b" style="left:0.0px;top:0.0px;width:768.4px;height:43.6px;background:#efefef;"></div></div>
<div class="b" style="left:1081.4px;top:601.4px;width:22.2px;height:22.2px;background:#2e93ea;border-radius:3px;"></div>
<svg class="b" style="left:1083.4px;top:604.0px;" width="18" height="17" viewBox="0 0 18 17" fill="none"><path d="M2.6 9L7.2 13.4L15.6 3" stroke="#fff" stroke-width="2.2" fill="none" stroke-linecap="round" stroke-linejoin="round"/></svg>
<svg class="b" style="left:1114.0px;top:597.5px;" width="30" height="30" viewBox="0 0 30 30" fill="none"><circle cx="15" cy="15" r="9.6" stroke="#1a1a1a" stroke-width="2.5"/><path d="M15 0.6V6M15 24V29.4M0.6 15H6M24 15H29.4" stroke="#1a1a1a" stroke-width="2.6"/></svg>
<div class="b" style="left:1153.3px;top:600.2px;width:24.6px;height:24.6px;border-radius:50%;background:#2c3fe6;border:1.3px solid #15153a;"></div>
<span class="t" style="left:1187.6px;top:605.2px;font-size:15.3px;color:#1f1f1f;letter-spacing:0.38px;">Paul Wagner | 76-UYG-09</span>
<div class="b" style="left:1507.2px;top:601.3px;width:98.8px;height:22.8px;background:#dde8f4;border-radius:3px;"></div>
<span class="t" style="left:1514.6px;top:606.7px;font-size:11.8px;color:#3b8fd8;letter-spacing:0.17px;font-weight:700;">IN PROGRESS</span>
<div class="b" style="left:1615.8px;top:602.8px;width:146.3px;height:19.8px;background:#b9bdc1;border-radius:3px;overflow:hidden;"><div class="b" style="left:0.0px;top:0.0px;width:27.9px;height:19.8px;background:repeating-linear-gradient(45deg,#41ad58 0 5.5px,#64bf72 5.5px 11px);"></div></div>
<span class="t" style="left:1663.2px;top:605.9px;font-size:13.8px;color:#fff;letter-spacing:-0.04px;">19.05 %</span>
<svg class="b" style="left:1791.5px;top:610.5px;" width="20" height="4" viewBox="0 0 20 4" fill="none"><g fill="#222"><circle cx="2.3" cy="2" r="1.35"/><circle cx="9.9" cy="2" r="1.35"/><circle cx="17.4" cy="2" r="1.35"/></g></svg>
<span class="t" style="left:1098.2px;top:643.9px;font-size:15px;color:#222;letter-spacing:0.11px;">Pallets: 10/14 (Units)</span>
<span class="t" style="left:1336.5px;top:643.9px;font-size:15px;color:#222;letter-spacing:0.31px;">Weight: 2315/3500 (Kg)</span>
<div class="b" style="left:1071.0px;top:668.8px;width:768.4px;height:1.2px;background:#e6e6e6;"></div>
<svg class="b" style="left:1130.6px;top:693.0px;" width="18" height="20" viewBox="0 0 18 20" fill="none"><g stroke="#5a5a5a" stroke-width="1.5" fill="none"><path d="M0.9 0.6V19.4"/><path d="M0.9 1.4H9.3V12.2H0.9"/><path d="M9.3 3.2H16.6V13.6H9.3"/></g></svg>
<span class="t" style="left:1152.2px;top:686.3px;font-size:12.3px;color:#5c5c5c;letter-spacing:0.61px;text-decoration:line-through;">8:00 AM</span>
<span class="t" style="left:1152.2px;top:704.8px;font-size:12.3px;color:#5c5c5c;letter-spacing:0.15px;">10:45 AM</span>
<div class="b" style="left:1263.6px;top:684.1px;width:191.2px;height:36.0px;background:#ecf5fd;border-radius:4px;"></div>
<svg class="b" style="left:1326.2px;top:692.6px;" width="18" height="20" viewBox="0 0 18 20" fill="none"><path d="M0.9 0.4V19.4" stroke="#3d8fd6" stroke-width="1.6"/><g fill="#3d8fd6"><rect x="1.20" y="0.80" width="2.29" height="2.20"/><rect x="5.77" y="0.80" width="2.29" height="2.20"/><rect x="10.34" y="0.80" width="2.29" height="2.20"/><rect x="14.91" y="0.80" width="2.29" height="2.20"/><rect x="3.49" y="3.00" width="2.29" height="2.20"/><rect x="8.06" y="3.00" width="2.29" height="2.20"/><rect x="12.63" y="3.00" width="2.29" height="2.20"/><rect x="1.20" y="5.20" width="2.29" height="2.20"/><rect x="5.77" y="5.20" width="2.29" height="2.20"/><rect x="10.34" y="5.20" width="2.29" height="2.20"/><rect x="14.91" y="5.20" width="2.29" height="2.20"/><rect x="3.49" y="7.40" width="2.29" height="2.20"/><rect x="8.06" y="7.40" width="2.29" height="2.20"/><rect x="12.63" y="7.40" width="2.29" height="2.20"/><rect x="1.20" y="9.60" width="2.29" height="2.20"/><rect x="5.77" y="9.60" width="2.29" height="2.20"/><rect x="10.34" y="9.60" width="2.29" height="2.20"/><rect x="14.91" y="9.60" width="2.29" height="2.20"/></g><rect x="1.2" y="0.8" width="16" height="11" fill="#3d8fd6" opacity=".4"/></svg>
<span class="t" style="left:1347.4px;top:686.3px;font-size:12.3px;color:#3b8fd8;letter-spacing:0.47px;text-decoration:line-through;">4:20 PM</span>
<span class="t" style="left:1347.4px;top:704.8px;font-size:12.3px;color:#3b8fd8;letter-spacing:-0.39px;">11:05 PM</span>
<svg class="b" style="left:1519.5px;top:693.8px;" width="24" height="16" viewBox="0 0 24 16" fill="none"><g stroke="#5a5a5a" stroke-width="1.5" fill="none" stroke-linejoin="miter"><path d="M5.2 1H18.8L23 15H1Z"/><path d="M12 1V3.4M12 6V9.4M12 12V15"/></g></svg>
<span class="t" style="left:1548.5px;top:695.8px;font-size:12.3px;color:#5c5c5c;letter-spacing:0.38px;">19 km</span>
<svg class="b" style="left:1727.6px;top:691.4px;" width="15" height="21" viewBox="0 0 15 21" fill="none"><g stroke="#5a5a5a" stroke-width="1.5" fill="none"><path d="M7.5 0.9C3.7 0.9 0.9 3.8 0.9 7.4C0.9 12 7.5 19.8 7.5 19.8S14.1 12 14.1 7.4C14.1 3.8 11.3 0.9 7.5 0.9Z"/></g><circle cx="7.5" cy="7.6" r="1.5" fill="#5a5a5a"/></svg>
<span class="t" style="left:1752.4px;top:695.8px;font-size:12.3px;color:#5c5c5c;letter-spacing:-0.30px;transform:scaleX(0.822);transform-origin:0 50%;">21</span>
<div class="b" style="left:1069.8px;top:745.3px;width:770.8px;height:132.0px;border:1.3px solid #dedede;background:#fff;"><div class="b" style="left:0.0px;top:0.0px;width:768.4px;height:43.6px;background:#efefef;"></div></div>
<div class="b" style="left:1081.4px;top:756.3px;width:22.2px;height:22.2px;background:#efefef;border:2px solid #6a6a6a;border-radius:3px;"></div>
<svg class="b" style="left:1114.0px;top:752.4px;" width="30" height="30" viewBox="0 0 30 30" fill="none"><circle cx="15" cy="15" r="9.6" stroke="#1a1a1a" stroke-width="2.5"/><path d="M15 0.6V6M15 24V29.4M0.6 15H6M24 15H29.4" stroke="#1a1a1a" stroke-width="2.6"/></svg>
<div class="b" style="left:1153.3px;top:755.1px;width:24.6px;height:24.6px;border-radius:50%;background:#7fe195;border:1.3px solid #15153a;"></div>
<span class="t" style="left:1187.6px;top:760.1px;font-size:15.3px;color:#1f1f1f;letter-spacing:0.17px;">Pierre Patel | 65-UYG-76</span>
<div class="b" style="left:1651.2px;top:756.2px;width:100.7px;height:22.8px;background:#fdf3dd;border-radius:3px;"></div>
<span class="t" style="left:1659.0px;top:761.6px;font-size:11.8px;color:#f3b53f;letter-spacing:0.25px;font-weight:700;">NOT STARTED</span>
<svg class="b" style="left:1791.5px;top:765.4px;" width="20" height="4" viewBox="0 0 20 4" fill="none"><g fill="#222"><circle cx="2.3" cy="2" r="1.35"/><circle cx="9.9" cy="2" r="1.35"/><circle cx="17.4" cy="2" r="1.35"/></g></svg>
<span class="t" style="left:1098.2px;top:798.8px;font-size:15px;color:#222;letter-spacing:0.42px;">Pallets: 4/9 (Units)</span>
<span class="t" style="left:1336.5px;top:798.8px;font-size:15px;color:#222;letter-spacing:0.50px;">Weight: 1000/2500 (Kg)</span>
<div class="b" style="left:1071.0px;top:823.7px;width:768.4px;height:1.2px;background:#e6e6e6;"></div>
<svg class="b" style="left:1091.4px;top:841.9px;" width="18" height="20" viewBox="0 0 18 20" fill="none"><g stroke="#5a5a5a" stroke-width="1.5" fill="none"><path d="M0.9 0.6V19.4"/><path d="M0.9 1.4H9.3V12.2H0.9"/><path d="M9.3 3.2H16.6V13.6H9.3"/></g></svg>
<span class="t" style="left:1112.8px;top:844.7px;font-size:12.3px;color:#5c5c5c;letter-spacing:0.65px;">8:00 AM</span>
<svg class="b" style="left:1201.8px;top:841.5px;" width="18" height="20" viewBox="0 0 18 20" fill="none"><path d="M0.9 0.4V19.4" stroke="#5a5a5a" stroke-width="1.6"/><g fill="#5a5a5a"><rect x="1.20" y="0.80" width="2.29" height="2.20"/><rect x="5.77" y="0.80" width="2.29" height="2.20"/><rect x="10.34" y="0.80" width="2.29" height="2.20"/><rect x="14.91" y="0.80" width="2.29" height="2.20"/><rect x="3.49" y="3.00" width="2.29" height="2.20"/><rect x="8.06" y="3.00" width="2.29" height="2.20"/><rect x="12.63" y="3.00" width="2.29" height="2.20"/><rect x="1.20" y="5.20" width="2.29" height="2.20"/><rect x="5.77" y="5.20" width="2.29" height="2.20"/><rect x="10.34" y="5.20" width="2.29" height="2.20"/><rect x="14.91" y="5.20" width="2.29" height="2.20"/><rect x="3.49" y="7.40" width="2.29" height="2.20"/><rect x="8.06" y="7.40" width="2.29" height="2.20"/><rect x="12.63" y="7.40" width="2.29" height="2.20"/><rect x="1.20" y="9.60" width="2.29" height="2.20"/><rect x="5.77" y="9.60" width="2.29" height="2.20"/><rect x="10.34" y="9.60" width="2.29" height="2.20"/><rect x="14.91" y="9.60" width="2.29" height="2.20"/></g><rect x="1.2" y="0.8" width="16" height="11" fill="#5a5a5a" opacity=".4"/></svg>
<span class="t" style="left:1223.1px;top:844.7px;font-size:12.3px;color:#5c5c5c;letter-spacing:-0.30px;transform:scaleX(0.956);transform-origin:0 50%;">12:17 PM</span>
<svg class="b" style="left:1308.2px;top:842.9px;" width="24" height="16" viewBox="0 0 24 16" fill="none"><g stroke="#5a5a5a" stroke-width="1.5" fill="none" stroke-linejoin="miter"><path d="M5.2 1H18.8L23 15H1Z"/><path d="M12 1V3.4M12 6V9.4M12 12V15"/></g></svg>
<span class="t" style="left:1337.2px;top:844.7px;font-size:12.3px;color:#5c5c5c;letter-spacing:0.18px;">16.9 km</span>
<svg class="b" style="left:1440.6px;top:840.5px;" width="15" height="21" viewBox="0 0 15 21" fill="none"><g stroke="#5a5a5a" stroke-width="1.5" fill="none"><path d="M7.5 0.9C3.7 0.9 0.9 3.8 0.9 7.4C0.9 12 7.5 19.8 7.5 19.8S14.1 12 14.1 7.4C14.1 3.8 11.3 0.9 7.5 0.9Z"/></g><circle cx="7.5" cy="7.6" r="1.5" fill="#5a5a5a"/></svg>
<span class="t" style="left:1465.6px;top:844.7px;font-size:12.3px;color:#5c5c5c;letter-spacing:-0.30px;transform:scaleX(0.770);transform-origin:0 50%;">11</span>
<svg class="b" style="left:1533.6px;top:842.7px;" width="20" height="16" viewBox="0 0 20 16" fill="none"><g stroke="#5a5a5a" stroke-width="1.5" fill="none" stroke-linejoin="round"><path d="M2.6 6.4L4.4 1.2H15.6L17.4 6.4"/><path d="M1 6.4H19V12.6H1Z"/><path d="M1.6 12.6V15.2H5V12.6M15 12.6V15.2H18.4V12.6"/><path d="M7.4 10.8C8.6 9.8 11.4 9.8 12.6 10.8" stroke-width="1.3"/></g><g fill="#5a5a5a"><rect x="2.6" y="8" width="3.2" height="1.7"/><rect x="14.2" y="8" width="3.2" height="1.7"/></g></svg>
<span class="t" style="left:1561.0px;top:844.7px;font-size:12.3px;color:#5c5c5c;letter-spacing:0.98px;">27min</span>
<svg class="b" style="left:1649.2px;top:842.1px;" width="17" height="18" viewBox="0 0 17 18" fill="none"><g stroke="#5a5a5a" stroke-width="1.6" fill="none"><circle cx="8.5" cy="6" r="5"/><path d="M0.9 17.4C1.4 14 3.4 11.8 5.4 10.4M16.1 17.4C15.6 14 13.6 11.8 11.6 10.4"/></g></svg>
<span class="t" style="left:1674.7px;top:844.7px;font-size:12.3px;color:#5c5c5c;letter-spacing:0.81px;">3h50</span>
<svg class="b" style="left:1750.6px;top:843.7px;" width="22" height="14" viewBox="0 0 22 14" fill="none"><rect x="0.9" y="0.9" width="20.2" height="12.2" stroke="#5a5a5a" stroke-width="1.7" fill="none"/><g fill="#5a5a5a"><circle cx="5" cy="7" r="1.1"/><circle cx="17" cy="7" r="1.1"/></g><text x="11" y="10.3" font-size="9.4" font-weight="700" fill="#5a5a5a" text-anchor="middle" font-family="Liberation Sans, sans-serif">1</text></svg>
<span class="t" style="left:1778.9px;top:844.7px;font-size:12.3px;color:#5c5c5c;letter-spacing:0.70px;">€40.57</span>
</div></div>
</body></html>
